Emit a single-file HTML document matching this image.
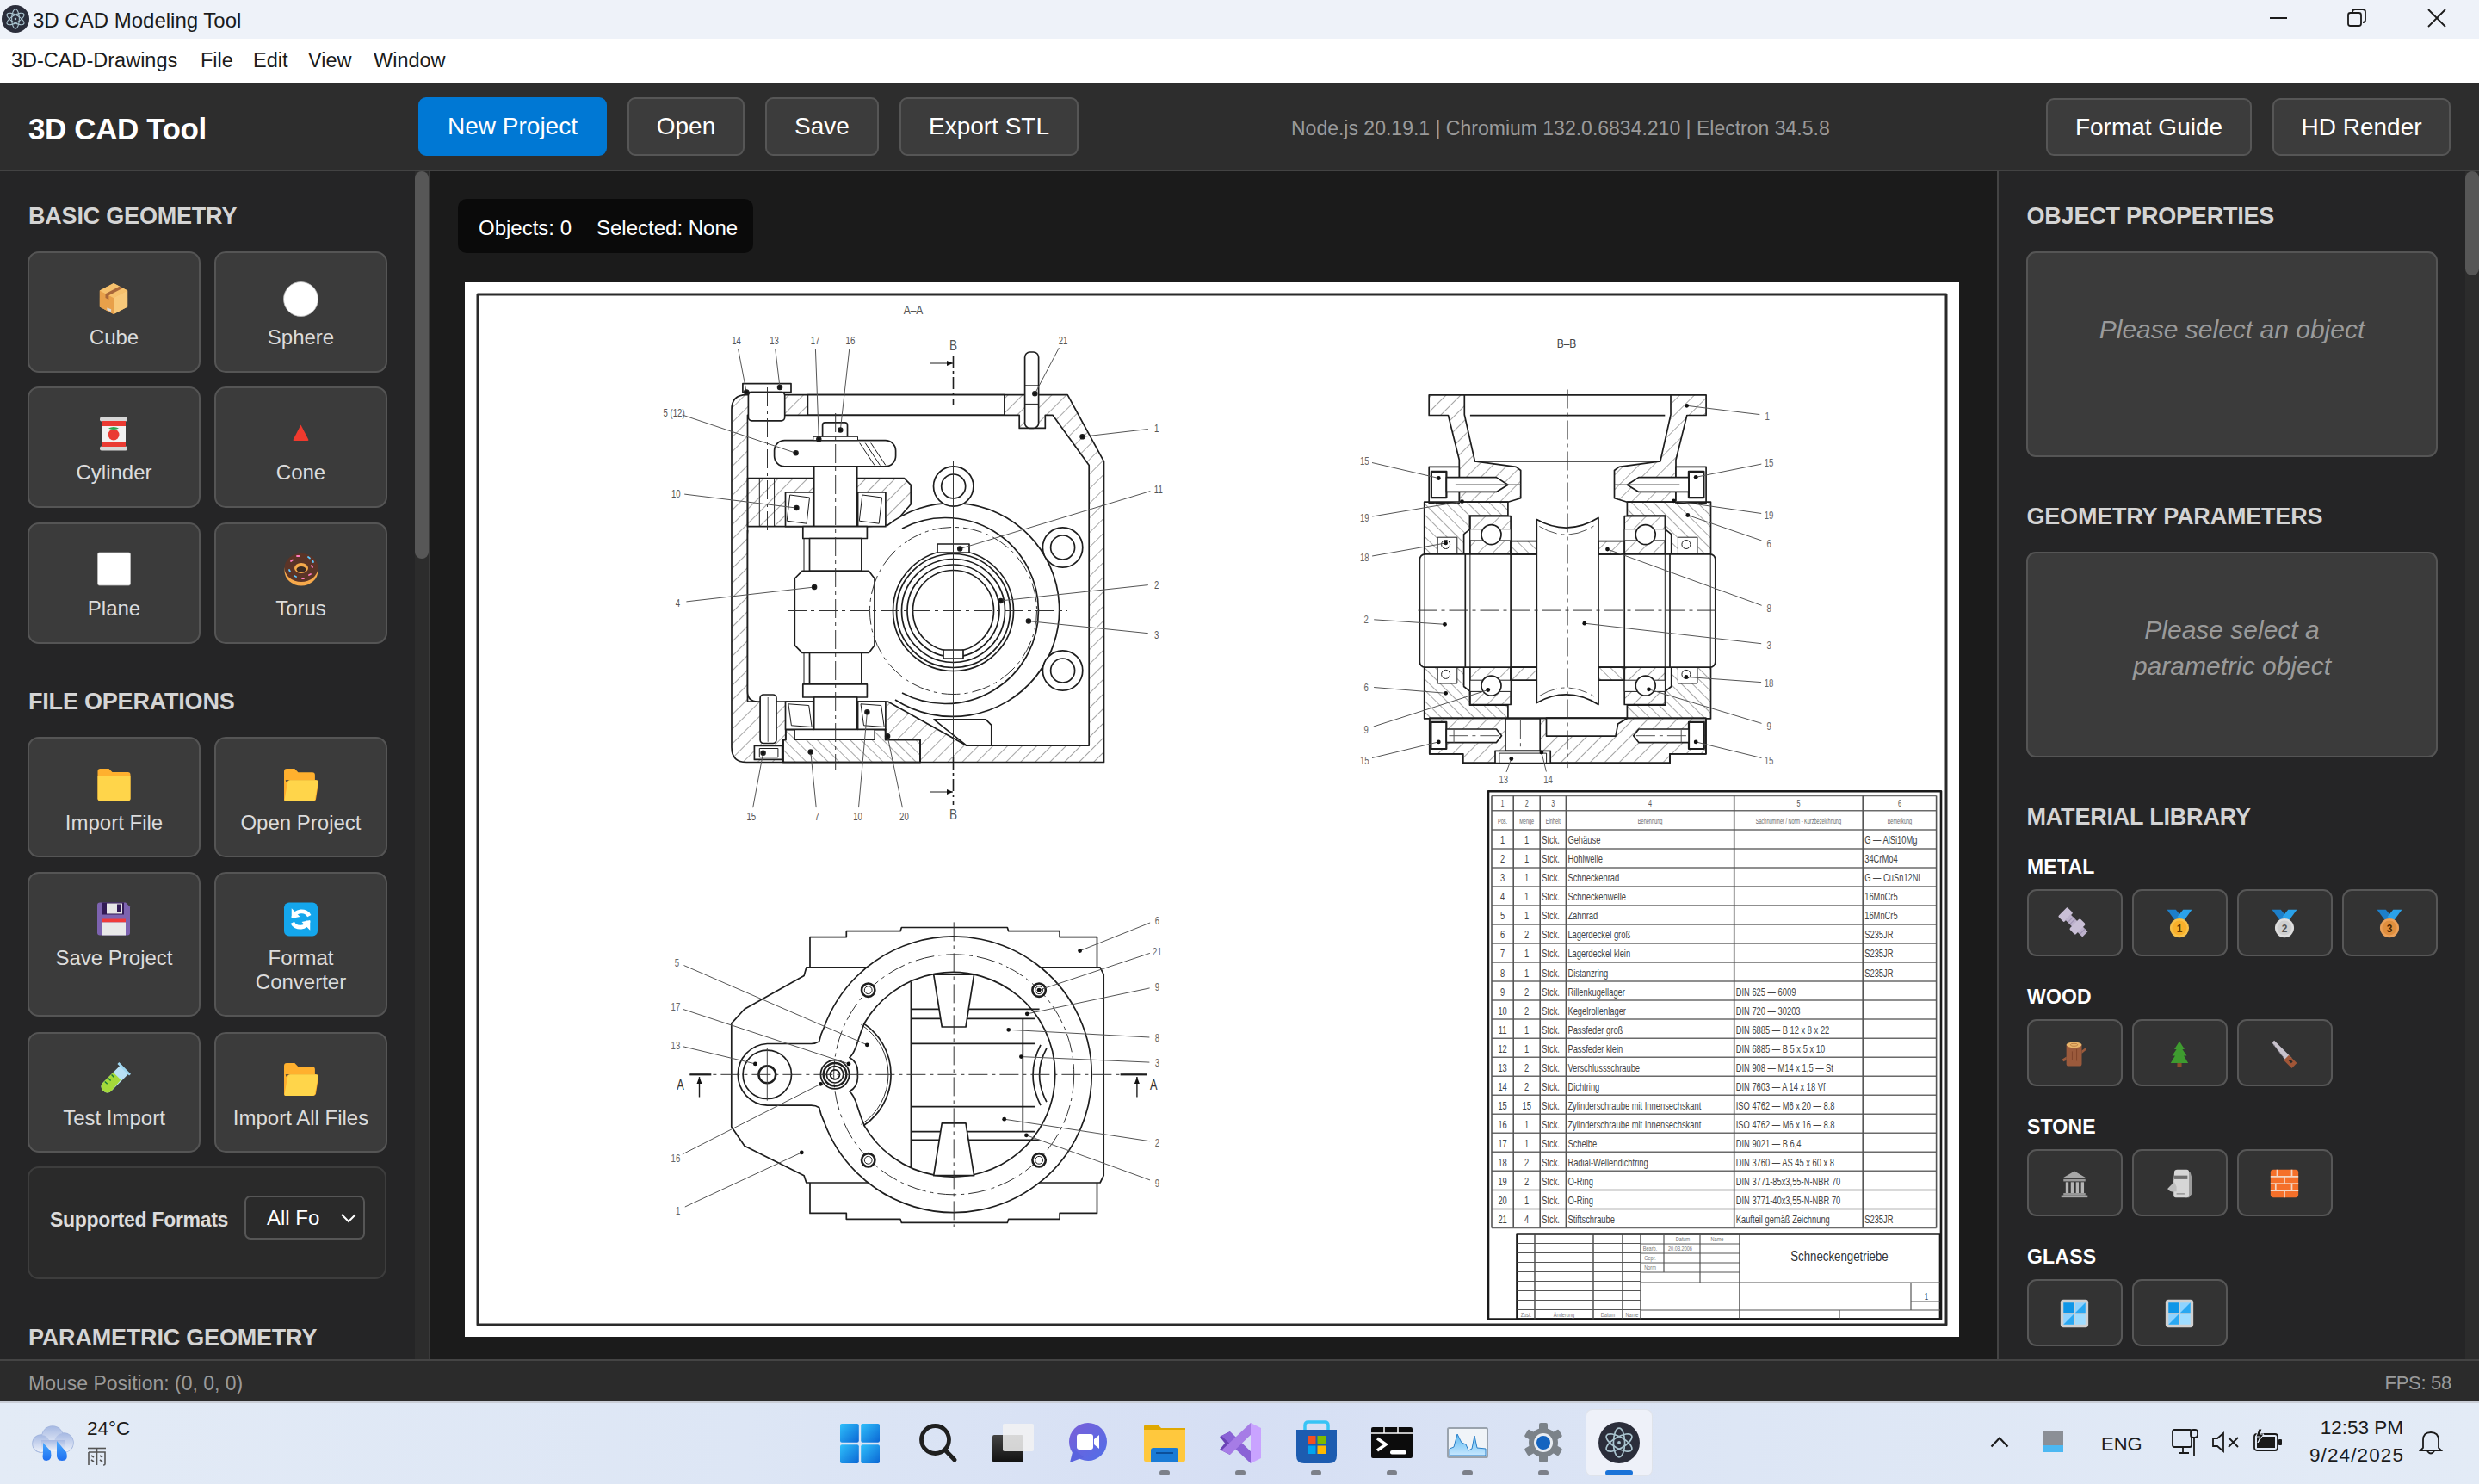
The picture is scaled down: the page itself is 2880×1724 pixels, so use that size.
<!DOCTYPE html>
<html><head><meta charset="utf-8"><title>3D CAD Modeling Tool</title>
<style>
html,body{margin:0;padding:0;}
body{width:2880px;height:1724px;position:relative;overflow:hidden;background:#1b1b1b;font-family:"Liberation Sans",sans-serif;}
.a{position:absolute;box-sizing:border-box;}
.t{position:absolute;white-space:nowrap;}
svg.a{overflow:visible;}
</style></head><body>
<div class="a" style="left:0px;top:0px;width:2880px;height:45px;background:#eef2f9"></div>
<svg class="a" style="left:2px;top:6px" width="32" height="32" viewBox="0 0 40 40"><circle cx="20" cy="20" r="20" fill="#2b2e3b"/><g fill="none" stroke="#a9c4cf" stroke-width="1.4"><ellipse cx="20" cy="20" rx="14" ry="5.5" transform="rotate(30 20 20)"/><ellipse cx="20" cy="20" rx="14" ry="5.5" transform="rotate(-30 20 20)"/><ellipse cx="20" cy="20" rx="14" ry="5.5" transform="rotate(90 20 20)"/></g><circle cx="20" cy="20" r="1.6" fill="#a9c4cf"/></svg>
<div class="t" style="left:38.0px;top:11.7px;font-size:24px;line-height:24px;color:#1b1b1b;font-weight:400;font-style:normal;letter-spacing:0px;">3D CAD Modeling Tool</div>
<div class="a" style="left:2637px;top:20px;width:20px;height:2px;background:#1b1b1b"></div>
<svg class="a" style="left:2726px;top:9px" width="24" height="24" viewBox="0 0 24 24"><rect x="2" y="6" width="15" height="15" rx="2.5" fill="none" stroke="#1b1b1b" stroke-width="1.8"/><path d="M7 5 Q7 2 10 2 L19 2 Q22 2 22 5 L22 14 Q22 17 19 17" fill="none" stroke="#1b1b1b" stroke-width="1.8"/></svg>
<svg class="a" style="left:2820px;top:10px" width="22" height="22" viewBox="0 0 22 22"><path d="M1 1 L21 21 M21 1 L1 21" stroke="#1b1b1b" stroke-width="1.8"/></svg>
<div class="a" style="left:0px;top:45px;width:2880px;height:52px;background:#fff"></div>
<div class="t" style="left:13.0px;top:59.1px;font-size:23.5px;line-height:23.5px;color:#1b1b1b;font-weight:400;font-style:normal;letter-spacing:0px;">3D-CAD-Drawings</div>
<div class="t" style="left:233.0px;top:59.1px;font-size:23.5px;line-height:23.5px;color:#1b1b1b;font-weight:400;font-style:normal;letter-spacing:0px;">File</div>
<div class="t" style="left:294.0px;top:59.1px;font-size:23.5px;line-height:23.5px;color:#1b1b1b;font-weight:400;font-style:normal;letter-spacing:0px;">Edit</div>
<div class="t" style="left:358.0px;top:59.1px;font-size:23.5px;line-height:23.5px;color:#1b1b1b;font-weight:400;font-style:normal;letter-spacing:0px;">View</div>
<div class="t" style="left:434.0px;top:59.1px;font-size:23.5px;line-height:23.5px;color:#1b1b1b;font-weight:400;font-style:normal;letter-spacing:0px;">Window</div>
<div class="a" style="left:0px;top:97px;width:2880px;height:100px;background:#2d2d2d"></div>
<div class="a" style="left:0px;top:197px;width:2880px;height:2px;background:#434343"></div>
<div class="t" style="left:33.0px;top:132.2px;font-size:35px;line-height:35px;color:#fff;font-weight:700;font-style:normal;letter-spacing:-0.4px;">3D CAD Tool</div>
<div class="a btn" style="left:486px;top:113px;width:219px;height:68px;background:#0078d4;border:2px solid #0078d4;border-radius:9px"></div>
<div class="t" style="left:295.5px;width:600px;text-align:center;top:132.7px;font-size:28px;line-height:28px;color:#fff;font-weight:400;font-style:normal;letter-spacing:0px">New Project</div>
<div class="a btn" style="left:729px;top:113px;width:136px;height:68px;background:#3c3c3c;border:2px solid #565656;border-radius:9px"></div>
<div class="t" style="left:497.0px;width:600px;text-align:center;top:132.7px;font-size:28px;line-height:28px;color:#fff;font-weight:400;font-style:normal;letter-spacing:0px">Open</div>
<div class="a btn" style="left:889px;top:113px;width:132px;height:68px;background:#3c3c3c;border:2px solid #565656;border-radius:9px"></div>
<div class="t" style="left:655.0px;width:600px;text-align:center;top:132.7px;font-size:28px;line-height:28px;color:#fff;font-weight:400;font-style:normal;letter-spacing:0px">Save</div>
<div class="a btn" style="left:1045px;top:113px;width:208px;height:68px;background:#3c3c3c;border:2px solid #565656;border-radius:9px"></div>
<div class="t" style="left:849.0px;width:600px;text-align:center;top:132.7px;font-size:28px;line-height:28px;color:#fff;font-weight:400;font-style:normal;letter-spacing:0px">Export STL</div>
<div class="a btn" style="left:2377px;top:114px;width:239px;height:67px;background:#3c3c3c;border:2px solid #565656;border-radius:9px"></div>
<div class="t" style="left:2196.5px;width:600px;text-align:center;top:133.7px;font-size:28px;line-height:28px;color:#fff;font-weight:400;font-style:normal;letter-spacing:0px">Format Guide</div>
<div class="a btn" style="left:2640px;top:114px;width:207px;height:67px;background:#3c3c3c;border:2px solid #565656;border-radius:9px"></div>
<div class="t" style="left:2443.5px;width:600px;text-align:center;top:133.7px;font-size:28px;line-height:28px;color:#fff;font-weight:400;font-style:normal;letter-spacing:0px">HD Render</div>
<div class="t" style="left:1500.0px;top:137.7px;font-size:23px;line-height:23px;color:#9a9a9a;font-weight:400;font-style:normal;letter-spacing:0px;">Node.js 20.19.1 | Chromium 132.0.6834.210 | Electron 34.5.8</div>
<div class="a" style="left:0px;top:199px;width:498px;height:1380px;background:#252526"></div>
<div class="a" style="left:498px;top:199px;width:2px;height:1380px;background:#3a3a3a"></div>
<div class="a" style="left:482px;top:199px;width:16px;height:1380px;background:#2c2c2c"></div>
<div class="a" style="left:482px;top:199px;width:16px;height:450px;background:#575757;border-radius:8px"></div>
<div class="t" style="left:33.0px;top:238.3px;font-size:27px;line-height:27px;color:#d4d4d4;font-weight:700;font-style:normal;letter-spacing:-0.2px;">BASIC GEOMETRY</div>
<div class="t" style="left:33.0px;top:802.4px;font-size:27px;line-height:27px;color:#d4d4d4;font-weight:700;font-style:normal;letter-spacing:-0.2px;">FILE OPERATIONS</div>
<div class="t" style="left:33.0px;top:1541.1px;font-size:27px;line-height:27px;color:#d4d4d4;font-weight:700;font-style:normal;letter-spacing:-0.2px;">PARAMETRIC GEOMETRY</div>
<div class="a" style="left:32px;top:292px;width:201px;height:141px;background:#3b3b3b;border:2px solid #555;border-radius:13px"></div>
<svg class="a" style="left:113px;top:326px" width="38" height="42" viewBox="0 0 40 40"><path d="M20 1 L37 10 L37 30 L20 39 L3 30 L3 10 Z" fill="#f4b860"/><path d="M20 19 L37 10 L37 30 L20 39 Z" fill="#f8c97a"/><path d="M3 10 L20 19 L20 39 L3 30 Z" fill="#e8a04a"/><path d="M3 10 L20 1 L37 10 L20 19 Z" fill="#f6c16d"/><path d="M10 14 L27 5 L31 7 L14 16 L14 21 L10 19 Z" fill="#a9683a"/><path d="M12 31 L17 33 L17 36 L12 34 Z" fill="#d9d9d9"/></svg>
<div class="t" style="left:32.0px;width:201px;text-align:center;top:380.2px;font-size:24px;line-height:24px;color:#dcdcdc;font-weight:400;font-style:normal;letter-spacing:0px">Cube</div>
<div class="a" style="left:249px;top:292px;width:201px;height:141px;background:#3b3b3b;border:2px solid #555;border-radius:13px"></div>
<svg class="a" style="left:329px;top:327px" width="41" height="41" viewBox="0 0 40 40"><circle cx="20" cy="20" r="19.5" fill="#fff" stroke="#bbb" stroke-width="0.8"/></svg>
<div class="t" style="left:249.0px;width:201px;text-align:center;top:380.2px;font-size:24px;line-height:24px;color:#dcdcdc;font-weight:400;font-style:normal;letter-spacing:0px">Sphere</div>
<div class="a" style="left:32px;top:449px;width:201px;height:141px;background:#3b3b3b;border:2px solid #555;border-radius:13px"></div>
<svg class="a" style="left:112px;top:484px" width="40" height="40" viewBox="0 0 40 40"><rect x="4" y="0.5" width="32" height="5" rx="2" fill="#d6d6d6"/><rect x="4" y="34.5" width="32" height="5" rx="2" fill="#d6d6d6"/><rect x="6" y="5" width="28" height="30" fill="#ea3a32"/><rect x="6" y="11" width="28" height="18" fill="#f1f1f1"/><circle cx="20" cy="20.5" r="8.5" fill="#f1f1f1"/><circle cx="20" cy="21" r="6.5" fill="#ea3a32"/><path d="M14 13.5 Q20 10.5 26 13.5 Q20 16.5 14 13.5Z" fill="#2fa84f"/></svg>
<div class="t" style="left:32.0px;width:201px;text-align:center;top:537.2px;font-size:24px;line-height:24px;color:#dcdcdc;font-weight:400;font-style:normal;letter-spacing:0px">Cylinder</div>
<div class="a" style="left:249px;top:449px;width:201px;height:141px;background:#3b3b3b;border:2px solid #555;border-radius:13px"></div>
<svg class="a" style="left:339px;top:492px" width="21" height="21" viewBox="0 0 40 40"><path d="M20 3 L37 36 Q37 38 35 38 L5 38 Q3 38 3 36 Z" fill="#f03a2e"/></svg>
<div class="t" style="left:249.0px;width:201px;text-align:center;top:537.2px;font-size:24px;line-height:24px;color:#dcdcdc;font-weight:400;font-style:normal;letter-spacing:0px">Cone</div>
<div class="a" style="left:32px;top:607px;width:201px;height:141px;background:#3b3b3b;border:2px solid #555;border-radius:13px"></div>
<svg class="a" style="left:112px;top:641px" width="41" height="40" viewBox="0 0 40 40"><rect x="1" y="1" width="38" height="38" rx="2" fill="#fff" stroke="#bbb" stroke-width="0.8"/></svg>
<div class="t" style="left:32.0px;width:201px;text-align:center;top:695.2px;font-size:24px;line-height:24px;color:#dcdcdc;font-weight:400;font-style:normal;letter-spacing:0px">Plane</div>
<div class="a" style="left:249px;top:607px;width:201px;height:141px;background:#3b3b3b;border:2px solid #555;border-radius:13px"></div>
<svg class="a" style="left:329.5px;top:641px" width="40" height="40" viewBox="0 0 40 40"><ellipse cx="20" cy="22" rx="19.5" ry="17.5" fill="#f6a94b"/><ellipse cx="20" cy="18.5" rx="19.5" ry="16.5" fill="#5b3427"/><ellipse cx="20" cy="19" rx="8" ry="6" fill="#f6a94b"/><ellipse cx="20" cy="20.5" rx="5.5" ry="3.5" fill="#3b2a22"/><g stroke-width="1.8" stroke-linecap="round"><path d="M8 11 l2 -1.5" stroke="#ff7bc0"/><path d="M28 6 l2 1.5" stroke="#5ec8ff"/><path d="M32 16 l1 2" stroke="#ff7bc0"/><path d="M6 21 l1 2" stroke="#5ec8ff"/><path d="M15 5 l2.5 0" stroke="#ff7bc0"/><path d="M29 27 l2 -1" stroke="#ff7bc0"/><path d="M12 28 l2 1" stroke="#5ec8ff"/><path d="M21 31 l2 0" stroke="#ff7bc0"/><path d="M33 10 l1 2" stroke="#5ec8ff"/></g></svg>
<div class="t" style="left:249.0px;width:201px;text-align:center;top:695.2px;font-size:24px;line-height:24px;color:#dcdcdc;font-weight:400;font-style:normal;letter-spacing:0px">Torus</div>
<div class="a" style="left:32px;top:856px;width:201px;height:140px;background:#3b3b3b;border:2px solid #555;border-radius:13px"></div>
<svg class="a" style="left:112px;top:892px" width="41" height="40" viewBox="0 0 40 40"><path d="M1 4 Q1 1 4 1 L14 1 L18 5 L36 5 Q39 5 39 8 L39 36 Q39 38 37 38 L3 38 Q1 38 1 36 Z" fill="#ffb02e"/><path d="M1 10 L39 10 L39 36 Q39 38 37 38 L3 38 Q1 38 1 36 Z" fill="#ffd54a"/></svg>
<div class="t" style="left:32.0px;width:201px;text-align:center;top:944.2px;font-size:24px;line-height:24px;color:#dcdcdc;font-weight:400;font-style:normal;letter-spacing:0px">Import File</div>
<div class="a" style="left:249px;top:856px;width:201px;height:140px;background:#3b3b3b;border:2px solid #555;border-radius:13px"></div>
<svg class="a" style="left:329px;top:892px" width="41" height="41" viewBox="0 0 40 40"><path d="M1 4 Q1 1 4 1 L13 1 L17 5 L33 5 Q36 5 36 8 L36 14 L1 14 Z" fill="#ffb02e"/><path d="M1 10 L1 36 Q1 38 3 38 L34 38 Q36 38 37 36 L40 17 Q40 14 37 14 L8 14 Q5 14 4 17 Z" fill="#ffb02e"/><path d="M8 14 L37 14 Q40 14 39.5 17 L36 36 Q35.5 38 33 38 L3 38 Q1 38 1.5 36 L5 17 Q5.5 14 8 14Z" fill="#ffd54a"/></svg>
<div class="t" style="left:249.0px;width:201px;text-align:center;top:944.2px;font-size:24px;line-height:24px;color:#dcdcdc;font-weight:400;font-style:normal;letter-spacing:0px">Open Project</div>
<div class="a" style="left:32px;top:1013px;width:201px;height:168px;background:#3b3b3b;border:2px solid #555;border-radius:13px"></div>
<svg class="a" style="left:112px;top:1047px" width="40" height="41" viewBox="0 0 40 40"><path d="M4 1 L34 1 L39 6 L39 36 Q39 39 36 39 L4 39 Q1 39 1 36 L1 4 Q1 1 4 1Z" fill="#7d63b0"/><rect x="6" y="1" width="26" height="14" fill="#321b55"/><rect x="12" y="2" width="18" height="12" fill="#e6e6e6"/><rect x="24" y="3" width="4" height="9" fill="#321b55"/><rect x="6" y="20" width="28" height="4" fill="#f03a3a"/><rect x="6" y="24" width="28" height="15" fill="#e9e9e9"/></svg>
<div class="t" style="left:32.0px;width:201px;text-align:center;top:1101.2px;font-size:24px;line-height:24px;color:#dcdcdc;font-weight:400;font-style:normal;letter-spacing:0px">Save Project</div>
<div class="a" style="left:249px;top:1013px;width:201px;height:168px;background:#3b3b3b;border:2px solid #555;border-radius:13px"></div>
<svg class="a" style="left:330px;top:1048px" width="39" height="40" viewBox="0 0 40 40"><rect x="0" y="0" width="40" height="40" rx="6" fill="#14a6ec"/><path d="M11 18 A10 9 0 0 1 30 16" stroke="#fff" stroke-width="5" fill="none"/><path d="M9 7 L9 19 L19 17 Z" fill="#fff"/><path d="M29 22 A10 9 0 0 1 10 24" stroke="#fff" stroke-width="5" fill="none"/><path d="M31 33 L31 21 L21 23 Z" fill="#fff"/></svg>
<div class="t" style="left:249.0px;width:201px;text-align:center;top:1101.2px;font-size:24px;line-height:24px;color:#dcdcdc;font-weight:400;font-style:normal;letter-spacing:0px">Format</div>
<div class="t" style="left:249.0px;width:201px;text-align:center;top:1128.7px;font-size:24px;line-height:24px;color:#dcdcdc;font-weight:400;font-style:normal;letter-spacing:0px">Converter</div>
<div class="a" style="left:32px;top:1199px;width:201px;height:140px;background:#3b3b3b;border:2px solid #555;border-radius:13px"></div>
<svg class="a" style="left:114px;top:1233px" width="39" height="39" viewBox="0 0 40 40"><path d="M27 4 L37 14 L16 35 Q11 40 6 35 Q1 30 6 25 Z" fill="#b8e0f5"/><path d="M18 13 L27 22 L16 35 Q11 40 6 35 Q1 30 6 25 Z" fill="#a5d93a"/><path d="M25 1 L39 15 L37 17 L23 3 Z" fill="#9fd6f0"/><g stroke="#1b7a3a" stroke-width="1.5"><path d="M12 20 l3 3"/><path d="M16 16 l3 3"/><path d="M8 24 l3 3"/></g></svg>
<div class="t" style="left:32.0px;width:201px;text-align:center;top:1287.2px;font-size:24px;line-height:24px;color:#dcdcdc;font-weight:400;font-style:normal;letter-spacing:0px">Test Import</div>
<div class="a" style="left:249px;top:1199px;width:201px;height:140px;background:#3b3b3b;border:2px solid #555;border-radius:13px"></div>
<svg class="a" style="left:329px;top:1234px" width="41" height="41" viewBox="0 0 40 40"><path d="M1 4 Q1 1 4 1 L13 1 L17 5 L33 5 Q36 5 36 8 L36 14 L1 14 Z" fill="#ffb02e"/><path d="M1 10 L1 36 Q1 38 3 38 L34 38 Q36 38 37 36 L40 17 Q40 14 37 14 L8 14 Q5 14 4 17 Z" fill="#ffb02e"/><path d="M8 14 L37 14 Q40 14 39.5 17 L36 36 Q35.5 38 33 38 L3 38 Q1 38 1.5 36 L5 17 Q5.5 14 8 14Z" fill="#ffd54a"/></svg>
<div class="t" style="left:249.0px;width:201px;text-align:center;top:1287.2px;font-size:24px;line-height:24px;color:#dcdcdc;font-weight:400;font-style:normal;letter-spacing:0px">Import All Files</div>
<div class="a" style="left:32px;top:1355px;width:417px;height:131px;background:#2a2a2a;border:2px solid #3d3d3d;border-radius:13px"></div>
<div class="t" style="left:58.0px;top:1405.9px;font-size:23px;line-height:23px;color:#dcdcdc;font-weight:700;font-style:normal;letter-spacing:-0.3px;">Supported Formats</div>
<div class="a" style="left:284px;top:1389px;width:140px;height:51px;background:#2a2a2a;border:2px solid #565656;border-radius:7px"></div>
<div class="t" style="left:310.0px;top:1403.0px;font-size:24px;line-height:24px;color:#fff;font-weight:400;font-style:normal;letter-spacing:0px;">All Fo</div>
<svg class="a" style="left:395px;top:1408px" width="20" height="14" viewBox="0 0 20 14"><path d="M2 3 L10 11 L18 3" fill="none" stroke="#fff" stroke-width="2"/></svg>
<div class="a" style="left:500px;top:199px;width:1820px;height:1380px;background:#1b1b1b"></div>
<div class="a" style="left:532px;top:231px;width:343px;height:63px;background:#0a0a0a;border-radius:10px"></div>
<div class="t" style="left:556.0px;top:253.2px;font-size:24px;line-height:24px;color:#fff;font-weight:400;font-style:normal;letter-spacing:0px;">Objects: 0</div>
<div class="t" style="left:693.0px;top:253.2px;font-size:24px;line-height:24px;color:#fff;font-weight:400;font-style:normal;letter-spacing:0px;">Selected: None</div>
<div class="a" style="left:540px;top:328px;width:1736px;height:1225px;background:#fff"></div>
<svg class="a" style="left:0;top:0" width="2880" height="1724" viewBox="0 0 2880 1724">
<defs><pattern id="hA" width="12" height="12" patternUnits="userSpaceOnUse" patternTransform="rotate(45)"><line x1="0" y1="0" x2="0" y2="12" stroke="#6a6a6a" stroke-width="1.2"/></pattern><pattern id="hB" width="9" height="9" patternUnits="userSpaceOnUse" patternTransform="rotate(-45)"><line x1="0" y1="0" x2="0" y2="9" stroke="#6a6a6a" stroke-width="1.2"/></pattern><pattern id="hC" width="9" height="9" patternUnits="userSpaceOnUse" patternTransform="rotate(45)"><line x1="0" y1="0" x2="0" y2="9" stroke="#5a5a5a" stroke-width="1.1"/></pattern></defs>
<g fill="none" stroke="#1e1e1e" stroke-width="1.7" stroke-linejoin="round">
<rect x="555" y="342" width="1706" height="1197" fill="none" stroke="#2a2a2a" stroke-width="3"/>
<path d="M850.0 868.2 L850.0 475.8 Q850.0 458.6 867.2 458.6 L1240.2 458.6 L1282.5 536.2 L1282.5 885.5 L867.2 885.5 Q850.0 885.5 850.0 868.2 Z" fill="url(#hA)" stroke="#1e1e1e" stroke-width="1.7"/>
<path d="M938.4 458.6 L1166.9 458.6 L1166.9 482.3 L938.4 482.3 Z" fill="#fff" stroke="#1e1e1e"   />
<path d="M868.5 488.8 L868.5 482.3 L1184.2 482.3 L1184.2 497.4 L1214.3 497.4 L1214.3 482.3 L1223.0 482.3 L1265.2 540.5 L1265.2 866.1 L1123.0 866.2 L1031.4 815.0 L868.5 815.0 Z" fill="#fff" stroke="#1e1e1e"   />
<path d="M868.5 555.6 L1050.5 555.6 L1058.2 563.4 L1058.2 585.8 L1037.5 609.5 L1007.4 611.7 L868.5 611.7 Z" fill="url(#hA)" stroke="#1e1e1e"   />
<path d="M882.3 555.6 L882.3 611.7" fill="none" stroke="#1e1e1e" stroke-width="1.0"  />
<path d="M899.6 555.6 L899.6 611.7" fill="none" stroke="#1e1e1e" stroke-width="1.0"  />
<path d="M1106.5 835.9 L1145.3 835.9 L1151.8 842.4 L1151.8 866.1 L1122.9 866.1 L1085.0 835.9 Z" fill="#fff" stroke="#1e1e1e"   />
<path d="M868.5 616.0 L868.5 803.6 Q868.5 815.0 880.1 815.0 L934.0 815.0" fill="#fff" stroke="#1e1e1e" stroke-width="1.7"/>
<path d="M909.9 859.5 L912.8 859.5 L912.8 847.4 L1028.7 847.4 L1028.7 859.5 L1069.0 859.5 L1069.0 885.5 L909.9 885.5 Z" fill="#fff" stroke="#1e1e1e"   />
<path d="M909.9 859.5 L912.8 859.5 L912.8 847.4 L1028.7 847.4 L1028.7 859.5 L1069.0 859.5 L1069.0 885.5 L909.9 885.5 Z" fill="url(#hB)" stroke="#1e1e1e"   />
<rect x="923.3" y="847.4" width="92.7" height="12.1" rx="0" fill="#fff" stroke="#1e1e1e" stroke-width="1.2"  />
<rect x="876.4" y="866.3" width="32.3" height="16.1" rx="0" fill="#fff" stroke="#1e1e1e"   />
<rect x="882.3" y="869.5" width="21.6" height="10.3" rx="0" fill="#fff" stroke="#1e1e1e" stroke-width="1.0"  />
<rect x="883.1" y="807.0" width="18.9" height="56.5" rx="4" fill="#fff" stroke="#1e1e1e"   />
<path d="M892.2 810.0 L892.2 861.8" stroke="#555" stroke-width="1.0"  />
<path d="M934.0 611.7 L934.0 807.9" fill="none" stroke="#1e1e1e" stroke-width="1.0"  />
<rect x="862.9" y="445.6" width="56.1" height="9.9" rx="0" fill="#fff" stroke="#1e1e1e"   />
<rect x="869.4" y="455.6" width="42.3" height="33.2" rx="4" fill="#fff" stroke="#1e1e1e"   />
<rect x="1190.6" y="409.0" width="16.0" height="88.4" rx="6" fill="#fff" stroke="#1e1e1e"   />
<path d="M1190.6 447.8 L1206.6 447.8" fill="none" stroke="#1e1e1e" stroke-width="1.0"  />
<path d="M1190.6 469.4 L1206.6 469.4" fill="none" stroke="#1e1e1e" stroke-width="1.0"  />
<rect x="899.6" y="511.6" width="141.0" height="30.2" rx="12" fill="#fff" stroke="#1e1e1e"   />
<path d="M998.7 514.6 L1016.0 540.5" fill="none" stroke="#1e1e1e" stroke-width="1.0"  />
<path d="M1005.2 514.6 L1022.4 540.5" fill="none" stroke="#1e1e1e" stroke-width="1.0"  />
<path d="M1011.7 514.6 L1028.9 540.5" fill="none" stroke="#1e1e1e" stroke-width="1.0"  />
<rect x="955.6" y="490.9" width="28.9" height="19.4" rx="3" fill="#fff" stroke="#1e1e1e"   />
<rect x="944.8" y="507.3" width="51.7" height="4.3" rx="0" fill="#fff" stroke="#1e1e1e" stroke-width="1.0"  />
<rect x="945.7" y="541.8" width="50.0" height="69.9" rx="0" fill="#fff" stroke="#1e1e1e"   />
<rect x="912.5" y="572.0" width="32.3" height="39.7" rx="0" fill="#fff" stroke="#1e1e1e"   />
<path d="M917.7 575.0 L940.5 578.0 L937.1 608.2 L914.2 605.2 Z" fill="none" stroke="#1e1e1e" stroke-width="1.0"  />
<rect x="996.6" y="572.0" width="32.3" height="39.7" rx="0" fill="#fff" stroke="#1e1e1e"   />
<path d="M1001.8 575.0 L1024.6 578.0 L1021.2 608.2 L998.3 605.2 Z" fill="none" stroke="#1e1e1e" stroke-width="1.0"  />
<rect x="932.8" y="611.7" width="74.6" height="13.8" rx="0" fill="#fff" stroke="#1e1e1e"   />
<rect x="940.5" y="625.5" width="60.4" height="37.9" rx="0" fill="#fff" stroke="#1e1e1e"   />
<path d="M931.9 663.4 L1009.5 663.4 L1016.0 672.0 L1016.0 749.7 L1009.5 758.3 L931.9 758.3 L923.3 749.7 L923.3 672.0 Z" fill="#fff" stroke="#1e1e1e"   />
<rect x="940.5" y="758.3" width="60.4" height="36.7" rx="0" fill="#fff" stroke="#1e1e1e"   />
<rect x="932.8" y="794.9" width="74.6" height="15.1" rx="0" fill="#fff" stroke="#1e1e1e"   />
<rect x="945.7" y="810.0" width="50.0" height="37.4" rx="0" fill="#fff" stroke="#1e1e1e"   />
<rect x="912.5" y="815.0" width="32.3" height="32.4" rx="0" fill="#fff" stroke="#1e1e1e"   />
<path d="M915.9 817.8 L939.7 819.5 L943.1 844.5 L919.4 842.8 Z" fill="none" stroke="#1e1e1e" stroke-width="1.0"  />
<rect x="996.6" y="815.0" width="32.3" height="32.4" rx="0" fill="#fff" stroke="#1e1e1e"   />
<path d="M1000.0 817.8 L1023.7 819.5 L1027.2 844.5 L1003.5 842.8 Z" fill="none" stroke="#1e1e1e" stroke-width="1.0"  />
<path d="M1030.0 611 A124 124 0 1 1 1040 813" fill="#fff" stroke="#1e1e1e" stroke-width="1.7"/>
<path d="M1048 614 A108 108 0 1 1 1048 805" fill="none" stroke="#1e1e1e" stroke-width="1.7"/>
<circle cx="1107.5" cy="709.5" r="97" fill="none" stroke="#333" stroke-width="1.0" stroke-dasharray="22 5 4 5"/>
<circle cx="1107.5" cy="709.5" r="70.0" fill="none" stroke="#1e1e1e"   />
<circle cx="1107.5" cy="709.5" r="66.0" fill="none" stroke="#1e1e1e"   />
<circle cx="1107.5" cy="709.5" r="60.0" fill="none" stroke="#1e1e1e"   />
<circle cx="1107.5" cy="709.5" r="53.5" fill="none" stroke="#1e1e1e"   />
<circle cx="1107.5" cy="709.5" r="47.0" fill="none" stroke="#1e1e1e"   />
<rect x="1089.0" y="632.0" width="37.0" height="10.0" rx="0" fill="#fff" stroke="#1e1e1e"   />
<rect x="1096.0" y="755.0" width="23.0" height="10.0" rx="0" fill="#fff" stroke="#1e1e1e"   />
<circle cx="1107.7" cy="565.0" r="23.2" fill="#fff" stroke="#1e1e1e"   />
<circle cx="1107.7" cy="565.0" r="14.0" fill="none" stroke="#1e1e1e"   />
<circle cx="1234.6" cy="636.0" r="23.2" fill="#fff" stroke="#1e1e1e"   />
<circle cx="1234.6" cy="636.0" r="14.0" fill="none" stroke="#1e1e1e"   />
<circle cx="1234.6" cy="779.0" r="23.2" fill="#fff" stroke="#1e1e1e"   />
<circle cx="1234.6" cy="779.0" r="14.0" fill="none" stroke="#1e1e1e"   />
<path d="M1057.5 663.0 L1057.5 663.0" stroke="#333" stroke-width="1.0"  stroke-dasharray="18.0 4.0 3.0 4.0"/>
<path d="M1107.5 535.0 L1107.5 895.0" stroke="#333" stroke-width="1.0"  />
<path d="M915.0 709.5 L1240.0 709.5" stroke="#333" stroke-width="1.0"  stroke-dasharray="22 5 4 5"/>
<path d="M970.7 480.0 L970.7 895.0" stroke="#333" stroke-width="1.0"  stroke-dasharray="22 5 4 5"/>
<path d="M891.5 450.0 L891.5 620.0" stroke="#333" stroke-width="1.0"  stroke-dasharray="22 5 4 5"/>
<path d="M1107.5 413.0 L1107.5 470.0" stroke="#1e1e1e" stroke-width="1.6"  stroke-dasharray="14 4 3 4"/>
<path d="M1107.5 880.0 L1107.5 935.0" stroke="#1e1e1e" stroke-width="1.6"  stroke-dasharray="14 4 3 4"/>
<path d="M1081.0 422.0 L1107.0 422.0" stroke="#1e1e1e" stroke-width="1.0"  />
<path d="M1081.0 920.0 L1107.0 920.0" stroke="#1e1e1e" stroke-width="1.0"  />
<path d="M1107 422 l-7 -3 v6z M1107 920 l-7 -3 v6z" fill="#111" stroke="none"/>
<text x="1107.5" y="407" font-size="17" fill="#555" stroke="none" font-family="Liberation Sans" text-anchor="middle" transform="translate(1107.5 407) scale(0.8 1) translate(-1107.5 -407)">B</text>
<text x="1107.5" y="952" font-size="17" fill="#555" stroke="none" font-family="Liberation Sans" text-anchor="middle" transform="translate(1107.5 952) scale(0.8 1) translate(-1107.5 -952)">B</text>
<text x="1061" y="365" font-size="15" fill="#555" stroke="none" font-family="Liberation Sans" text-anchor="middle" transform="translate(1061 365) scale(0.8 1) translate(-1061 -365)">A–A</text>
<path d="M857.5 405.0 L867.2 455.6" stroke="#555" stroke-width="1.0"  />
<circle cx="867.2" cy="455.6" r="2.4" fill="#111"/>
<text x="855.567054764985" y="400.1962052608883" font-size="12" fill="#555" stroke="none" font-family="Liberation Sans" text-anchor="middle" transform="translate(855.567054764985 400.1962052608883) scale(0.8 1) translate(-855.567054764985 -400.1962052608883)">14</text>
<path d="M900.7 405.1 L906.0 450.0" stroke="#555" stroke-width="1.0"  />
<circle cx="906.0" cy="450.0" r="2.4" fill="#111"/>
<text x="899.5515308322553" y="400.1962052608883" font-size="12" fill="#555" stroke="none" font-family="Liberation Sans" text-anchor="middle" transform="translate(899.5515308322553 400.1962052608883) scale(0.8 1) translate(-899.5515308322553 -400.1962052608883)">13</text>
<path d="M947.4 405.2 L951.3 510.3" stroke="#555" stroke-width="1.0"  />
<circle cx="951.3" cy="510.3" r="2.4" fill="#111"/>
<text x="946.9857697283312" y="400.1962052608883" font-size="12" fill="#555" stroke="none" font-family="Liberation Sans" text-anchor="middle" transform="translate(946.9857697283312 400.1962052608883) scale(0.8 1) translate(-946.9857697283312 -400.1962052608883)">17</text>
<path d="M986.8 405.1 L976.3 499.6" stroke="#555" stroke-width="1.0"  />
<circle cx="976.3" cy="499.6" r="2.4" fill="#111"/>
<text x="987.9517033203967" y="400.1962052608883" font-size="12" fill="#555" stroke="none" font-family="Liberation Sans" text-anchor="middle" transform="translate(987.9517033203967 400.1962052608883) scale(0.8 1) translate(-987.9517033203967 -400.1962052608883)">16</text>
<path d="M1230.4 404.0 L1202.3 457.3" stroke="#555" stroke-width="1.0"  />
<circle cx="1202.3" cy="457.3" r="2.4" fill="#111"/>
<text x="1235.0409659335921" y="400.1962052608883" font-size="12" fill="#555" stroke="none" font-family="Liberation Sans" text-anchor="middle" transform="translate(1235.0409659335921 400.1962052608883) scale(0.8 1) translate(-1235.0409659335921 -400.1962052608883)">21</text>
<path d="M792.6 482.0 L924.6 526.3" stroke="#555" stroke-width="1.0"  />
<circle cx="924.6" cy="526.3" r="2.4" fill="#111"/>
<text x="783.122035360069" y="483.8529538594222" font-size="12" fill="#555" stroke="none" font-family="Liberation Sans" text-anchor="middle" transform="translate(783.122035360069 483.8529538594222) scale(0.8 1) translate(-783.122035360069 -483.8529538594222)">5 (12)</text>
<path d="M1333.8 498.5 L1257.5 507.3" stroke="#555" stroke-width="1.0"  />
<circle cx="1257.5" cy="507.3" r="2.4" fill="#111"/>
<text x="1343.708495040966" y="502.39542906425186" font-size="12" fill="#555" stroke="none" font-family="Liberation Sans" text-anchor="middle" transform="translate(1343.708495040966 502.39542906425186) scale(0.8 1) translate(-1343.708495040966 -502.39542906425186)">1</text>
<path d="M795.2 574.1 L925.4 590.1" stroke="#555" stroke-width="1.0"  />
<circle cx="925.4" cy="590.1" r="2.4" fill="#111"/>
<text x="785.2781371280724" y="577.8589909443726" font-size="12" fill="#555" stroke="none" font-family="Liberation Sans" text-anchor="middle" transform="translate(785.2781371280724 577.8589909443726) scale(0.8 1) translate(-785.2781371280724 -577.8589909443726)">10</text>
<path d="M1336.3 570.6 L1115.2 637.5" stroke="#555" stroke-width="1.0"  />
<circle cx="1115.2" cy="637.5" r="2.4" fill="#111"/>
<text x="1345.8645968089695" y="572.6843467011643" font-size="12" fill="#555" stroke="none" font-family="Liberation Sans" text-anchor="middle" transform="translate(1345.8645968089695 572.6843467011643) scale(0.8 1) translate(-1345.8645968089695 -572.6843467011643)">11</text>
<path d="M797.4 698.9 L946.1 682.0" stroke="#555" stroke-width="1.0"  />
<circle cx="946.1" cy="682.0" r="2.4" fill="#111"/>
<text x="787.4342388960758" y="705.068995256576" font-size="12" fill="#555" stroke="none" font-family="Liberation Sans" text-anchor="middle" transform="translate(787.4342388960758 705.068995256576) scale(0.8 1) translate(-787.4342388960758 -705.068995256576)">4</text>
<path d="M1333.8 679.6 L1162.6 697.9" stroke="#555" stroke-width="1.0"  />
<circle cx="1162.6" cy="697.9" r="2.4" fill="#111"/>
<text x="1343.708495040966" y="683.5079775765416" font-size="12" fill="#555" stroke="none" font-family="Liberation Sans" text-anchor="middle" transform="translate(1343.708495040966 683.5079775765416) scale(0.8 1) translate(-1343.708495040966 -683.5079775765416)">2</text>
<path d="M1333.8 735.7 L1194.9 721.6" stroke="#555" stroke-width="1.0"  />
<circle cx="1194.9" cy="721.6" r="2.4" fill="#111"/>
<text x="1343.708495040966" y="741.7227253126348" font-size="12" fill="#555" stroke="none" font-family="Liberation Sans" text-anchor="middle" transform="translate(1343.708495040966 741.7227253126348) scale(0.8 1) translate(-1343.708495040966 -741.7227253126348)">3</text>
<path d="M874.7 938.2 L886.6 874.7" stroke="#555" stroke-width="1.0"  />
<circle cx="886.6" cy="874.7" r="2.4" fill="#111"/>
<text x="872.8158689090126" y="953.0206985769728" font-size="12" fill="#555" stroke="none" font-family="Liberation Sans" text-anchor="middle" transform="translate(872.8158689090126 953.0206985769728) scale(0.8 1) translate(-872.8158689090126 -953.0206985769728)">15</text>
<path d="M948.2 938.1 L941.8 873.4" stroke="#555" stroke-width="1.0"  />
<circle cx="941.8" cy="873.4" r="2.4" fill="#111"/>
<text x="949.1418714963346" y="953.0206985769728" font-size="12" fill="#555" stroke="none" font-family="Liberation Sans" text-anchor="middle" transform="translate(949.1418714963346 953.0206985769728) scale(0.8 1) translate(-949.1418714963346 -953.0206985769728)">7</text>
<path d="M997.5 938.1 L1007.4 827.3" stroke="#555" stroke-width="1.0"  />
<circle cx="1007.4" cy="827.3" r="2.4" fill="#111"/>
<text x="996.5761103924106" y="953.0206985769728" font-size="12" fill="#555" stroke="none" font-family="Liberation Sans" text-anchor="middle" transform="translate(996.5761103924106 953.0206985769728) scale(0.8 1) translate(-996.5761103924106 -953.0206985769728)">10</text>
<path d="M1048.4 938.2 L1031.1 855.3" stroke="#555" stroke-width="1.0"  />
<circle cx="1031.1" cy="855.3" r="2.4" fill="#111"/>
<text x="1050.4786545924967" y="953.0206985769728" font-size="12" fill="#555" stroke="none" font-family="Liberation Sans" text-anchor="middle" transform="translate(1050.4786545924967 953.0206985769728) scale(0.8 1) translate(-1050.4786545924967 -953.0206985769728)">20</text>
<path d="M1660.2 458.9 L1701.3 458.9 L1701.3 481.8 L1713.4 535.8 L1761.3 542.4 L1766.7 546.5 L1766.7 578.8 L1751.9 583.2 L1695.3 583.2 L1695.3 534.3 L1682.5 482.5 L1660.2 482.5 Z" fill="url(#hA)" stroke="#1e1e1e"   />
<path d="M1982.1 458.9 L1941.0 458.9 L1941.0 481.8 L1928.9 535.8 L1881.0 542.4 L1875.5 546.5 L1875.5 578.8 L1890.4 583.2 L1947.0 583.2 L1947.0 534.3 L1959.8 482.5 L1982.1 482.5 Z" fill="url(#hA)" stroke="#1e1e1e"   />
<path d="M1701.3 458.9 L1941.0 458.9" stroke="#1e1e1e"   />
<path d="M1707.9 482.6 L1934.3 482.6" stroke="#1e1e1e"   />
<path d="M1713.4 535.8 L1928.9 535.8" stroke="#1e1e1e"   />
<path d="M1660.2 542.4 L1695.3 542.4 L1695.3 584.2 L1660.2 584.2 Z" fill="#fff" stroke="#1e1e1e"   />
<path d="M1662.9 547.8 L1680.4 547.8 L1680.4 578.1 L1662.9 578.1 Z" fill="#fff" stroke="#1e1e1e" stroke-width="2.2"  />
<path d="M1680.4 554.6 L1738.4 554.6 L1751.9 563.3 L1738.4 571.4 L1680.4 571.4 Z" fill="#fff" stroke="#1e1e1e"   />
<path d="M1690.9 563.0 L1766.4 563.0" stroke="#555" stroke-width="1.0"  />
<path d="M1982.1 542.4 L1947.0 542.4 L1947.0 584.2 L1982.1 584.2 Z" fill="#fff" stroke="#1e1e1e"   />
<path d="M1979.4 547.8 L1961.9 547.8 L1961.9 578.1 L1979.4 578.1 Z" fill="#fff" stroke="#1e1e1e" stroke-width="2.2"  />
<path d="M1961.9 554.6 L1903.8 554.6 L1890.4 563.3 L1903.8 571.4 L1961.9 571.4 Z" fill="#fff" stroke="#1e1e1e"   />
<path d="M1951.3 563.0 L1875.8 563.0" stroke="#555" stroke-width="1.0"  />
<path d="M1654.7 583.2 L1751.9 583.2 L1751.9 599.0 L1707.4 599.0 L1707.4 615.2 L1700.6 620.6 L1700.6 643.8 L1654.7 643.8 Z" fill="url(#hB)" stroke="#1e1e1e"   />
<path d="M1987.5 583.2 L1890.4 583.2 L1890.4 599.0 L1934.9 599.0 L1934.9 615.2 L1941.7 620.6 L1941.7 643.8 L1987.5 643.8 Z" fill="url(#hB)" stroke="#1e1e1e"   />
<path d="M1654.7 834.9 L1751.9 834.9 L1751.9 819.1 L1707.4 819.1 L1707.4 802.9 L1700.6 797.5 L1700.6 774.3 L1654.7 774.3 Z" fill="url(#hB)" stroke="#1e1e1e"   />
<path d="M1987.5 834.9 L1890.4 834.9 L1890.4 819.1 L1934.9 819.1 L1934.9 802.9 L1941.7 797.5 L1941.7 774.3 L1987.5 774.3 Z" fill="url(#hB)" stroke="#1e1e1e"   />
<rect x="1670.2" y="624.2" width="22.6" height="18.9" rx="0" fill="#fff" stroke="#1e1e1e" stroke-width="1.0"  />
<circle cx="1679.6" cy="632.5" r="5.0" fill="none" stroke="#1e1e1e" stroke-width="1.0"  />
<rect x="1949.4" y="624.2" width="22.6" height="18.9" rx="0" fill="#fff" stroke="#1e1e1e" stroke-width="1.0"  />
<circle cx="1958.9" cy="632.5" r="5.0" fill="none" stroke="#1e1e1e" stroke-width="1.0"  />
<rect x="1670.2" y="775.1" width="22.6" height="18.9" rx="0" fill="#fff" stroke="#1e1e1e" stroke-width="1.0"  />
<circle cx="1679.6" cy="783.4" r="5.0" fill="none" stroke="#1e1e1e" stroke-width="1.0"  />
<rect x="1949.4" y="775.1" width="22.6" height="18.9" rx="0" fill="#fff" stroke="#1e1e1e" stroke-width="1.0"  />
<circle cx="1958.9" cy="783.4" r="5.0" fill="none" stroke="#1e1e1e" stroke-width="1.0"  />
<rect x="1707.9" y="599.6" width="47.2" height="43.4" rx="0" fill="url(#hA)" stroke="#1e1e1e"   />
<rect x="1707.9" y="614.7" width="47.2" height="13.2" rx="0" fill="#fff" stroke="#1e1e1e" stroke-width="1.0"  />
<circle cx="1732.5" cy="621.1" r="11.5" fill="#fff" stroke="#1e1e1e"   />
<rect x="1887.2" y="599.6" width="47.2" height="43.4" rx="0" fill="url(#hA)" stroke="#1e1e1e"   />
<rect x="1887.2" y="614.7" width="47.2" height="13.2" rx="0" fill="#fff" stroke="#1e1e1e" stroke-width="1.0"  />
<circle cx="1911.7" cy="621.1" r="11.5" fill="#fff" stroke="#1e1e1e"   />
<rect x="1707.9" y="775.1" width="47.2" height="43.4" rx="0" fill="url(#hA)" stroke="#1e1e1e"   />
<rect x="1707.9" y="790.2" width="47.2" height="13.2" rx="0" fill="#fff" stroke="#1e1e1e" stroke-width="1.0"  />
<circle cx="1732.5" cy="796.6" r="11.5" fill="#fff" stroke="#1e1e1e"   />
<rect x="1887.2" y="775.1" width="47.2" height="43.4" rx="0" fill="url(#hA)" stroke="#1e1e1e"   />
<rect x="1887.2" y="790.2" width="47.2" height="13.2" rx="0" fill="#fff" stroke="#1e1e1e" stroke-width="1.0"  />
<circle cx="1911.7" cy="796.6" r="11.5" fill="#fff" stroke="#1e1e1e"   />
<rect x="1649.4" y="643.8" width="343.4" height="131.3" rx="6" fill="#fff" stroke="#1e1e1e"   />
<path d="M1655.1 643.8 L1655.1 775.1" stroke="#1e1e1e" stroke-width="1.0"  />
<path d="M1702.3 643.8 L1702.3 775.1" stroke="#1e1e1e" stroke-width="1.7"  />
<path d="M1707.9 643.8 L1707.9 775.1" stroke="#1e1e1e" stroke-width="1.0"  />
<path d="M1755.1 643.8 L1755.1 775.1" stroke="#1e1e1e" stroke-width="1.7"  />
<path d="M1887.2 643.8 L1887.2 775.1" stroke="#1e1e1e" stroke-width="1.7"  />
<path d="M1934.3 643.8 L1934.3 775.1" stroke="#1e1e1e" stroke-width="1.0"  />
<path d="M1940.0 643.8 L1940.0 775.1" stroke="#1e1e1e" stroke-width="1.7"  />
<path d="M1987.2 643.8 L1987.2 775.1" stroke="#1e1e1e" stroke-width="1.0"  />
<rect x="1755.1" y="628.7" width="30.2" height="15.1" rx="0" fill="url(#hB)" stroke="#1e1e1e"   />
<rect x="1755.1" y="775.1" width="30.2" height="15.1" rx="0" fill="url(#hA)" stroke="#1e1e1e"   />
<rect x="1857.0" y="628.7" width="30.2" height="15.1" rx="0" fill="url(#hA)" stroke="#1e1e1e"   />
<rect x="1857.0" y="775.1" width="30.2" height="15.1" rx="0" fill="url(#hB)" stroke="#1e1e1e"   />
<path d="M1785.3 603.5 Q1821.1 623.5 1857.0 601.5 L1857.0 818.5 Q1821.1 796.5 1785.3 816.5 Z" fill="#fff" stroke="#1e1e1e" stroke-width="1.7"/>
<path d="M1788.3 611.5 Q1821.1 631.5 1854.0 609.5" fill="none" stroke="#555" stroke-width="1.0" stroke-dasharray="22 5 4 5"/>
<path d="M1788.3 808.5 Q1821.1 788.5 1854.0 810.5" fill="none" stroke="#555" stroke-width="1.0" stroke-dasharray="22 5 4 5"/>
<path d="M1660.8 834.3 L1981.9 834.3 L1981.9 875.8 L1940.0 875.8 L1940.0 886.4 L1699.6 886.4 L1699.6 875.8 L1660.8 875.8 Z" fill="#fff" stroke="#1e1e1e"   />
<path d="M1660.8 834.3 L1981.9 834.3 L1981.9 875.8 L1940.0 875.8 L1940.0 886.4 L1699.6 886.4 L1699.6 875.8 L1660.8 875.8 Z" fill="url(#hA)" stroke="#1e1e1e"   />
<path d="M1796.5 834.2 L1796.5 855.1 L1877.0 855.1 L1879.6 841.1 L1890.9 834.3 Z" fill="#fff" stroke="#1e1e1e"   />
<rect x="1749.0" y="835.0" width="40.2" height="37.3" rx="0" fill="#fff" stroke="#1e1e1e"   />
<path d="M1766.4 836.2 L1766.4 871.3" stroke="#555" stroke-width="1.0"  stroke-dasharray="22 5 4 5"/>
<rect x="1737.0" y="872.3" width="64.2" height="14.2" rx="0" fill="#fff" stroke="#1e1e1e"   />
<rect x="1741.9" y="875.1" width="54.7" height="11.4" rx="0" fill="none" stroke="#1e1e1e" stroke-width="1.0"  />
<path d="M1662.4 838.8 L1680.3 838.8 L1680.3 870.0 L1662.4 870.0 Z" fill="#fff" stroke="#1e1e1e" stroke-width="2.2"  />
<path d="M1680.3 847.0 L1738.5 847.0 L1744.5 854.7 L1738.5 862.6 L1680.3 862.6 Z" fill="#fff" stroke="#1e1e1e"   />
<path d="M1683.4 854.7 L1745.7 854.7" stroke="#555" stroke-width="1.0"  stroke-dasharray="22 5 4 5"/>
<path d="M1689.1 847.0 L1689.1 862.6" stroke="#555" stroke-width="1.0"  />
<path d="M1979.8 838.8 L1962.0 838.8 L1962.0 870.0 L1979.8 870.0 Z" fill="#fff" stroke="#1e1e1e" stroke-width="2.2"  />
<path d="M1962.0 847.0 L1903.8 847.0 L1897.7 854.7 L1903.8 862.6 L1962.0 862.6 Z" fill="#fff" stroke="#1e1e1e"   />
<path d="M1958.9 854.7 L1896.6 854.7" stroke="#555" stroke-width="1.0"  stroke-dasharray="22 5 4 5"/>
<path d="M1953.2 847.0 L1953.2 862.6" stroke="#555" stroke-width="1.0"  />
<path d="M1821.1 452.5 L1821.1 892.1" stroke="#333" stroke-width="1.0"  stroke-dasharray="22 5 4 5"/>
<path d="M1647.5 709.1 L1994.7 709.1" stroke="#333" stroke-width="1.0"  stroke-dasharray="22 5 4 5"/>
<text x="1820.0" y="404.5" font-size="15" fill="#444" stroke="none" font-family="Liberation Sans" text-anchor="middle" transform="translate(1820.0 404.5) scale(0.8 1) translate(-1820.0 -404.5)">B–B</text>
<path d="M2044.3 481.6 L1959.6 471.3" stroke="#555" stroke-width="1.0"  />
<circle cx="1959.6" cy="471.3" r="2.4" fill="#111" stroke="none"/>
<text x="2053.2" y="487.6" font-size="12" fill="#666" stroke="none" font-family="Liberation Sans" text-anchor="middle" transform="translate(2053.2 487.6) scale(0.8 1) translate(-2053.2 -487.6)">1</text>
<path d="M1594.0 537.5 L1671.3 555.5" stroke="#555" stroke-width="1.0"  />
<circle cx="1671.3" cy="555.5" r="2.4" fill="#111" stroke="none"/>
<text x="1585.3" y="540.5" font-size="12" fill="#666" stroke="none" font-family="Liberation Sans" text-anchor="middle" transform="translate(1585.3 540.5) scale(0.8 1) translate(-1585.3 -540.5)">15</text>
<path d="M2046.3 539.1 L1970.2 554.3" stroke="#555" stroke-width="1.0"  />
<circle cx="1970.2" cy="554.3" r="2.4" fill="#111" stroke="none"/>
<text x="2055.1" y="542.4" font-size="12" fill="#666" stroke="none" font-family="Liberation Sans" text-anchor="middle" transform="translate(2055.1 542.4) scale(0.8 1) translate(-2055.1 -542.4)">15</text>
<path d="M1594.2 600.0 L1698.5 582.6" stroke="#555" stroke-width="1.0"  />
<circle cx="1698.5" cy="582.6" r="2.4" fill="#111" stroke="none"/>
<text x="1585.3" y="606.5" font-size="12" fill="#666" stroke="none" font-family="Liberation Sans" text-anchor="middle" transform="translate(1585.3 606.5) scale(0.8 1) translate(-1585.3 -606.5)">19</text>
<path d="M2046.2 596.5 L1944.5 581.9" stroke="#555" stroke-width="1.0"  />
<circle cx="1944.5" cy="581.9" r="2.4" fill="#111" stroke="none"/>
<text x="2055.1" y="602.7" font-size="12" fill="#666" stroke="none" font-family="Liberation Sans" text-anchor="middle" transform="translate(2055.1 602.7) scale(0.8 1) translate(-2055.1 -602.7)">19</text>
<path d="M2046.6 628.0 L1960.8 598.5" stroke="#555" stroke-width="1.0"  />
<circle cx="1960.8" cy="598.5" r="2.4" fill="#111" stroke="none"/>
<text x="2055.1" y="635.9" font-size="12" fill="#666" stroke="none" font-family="Liberation Sans" text-anchor="middle" transform="translate(2055.1 635.9) scale(0.8 1) translate(-2055.1 -635.9)">6</text>
<path d="M1594.1 646.0 L1679.6 630.9" stroke="#555" stroke-width="1.0"  />
<circle cx="1679.6" cy="630.9" r="2.4" fill="#111" stroke="none"/>
<text x="1585.3" y="652.5" font-size="12" fill="#666" stroke="none" font-family="Liberation Sans" text-anchor="middle" transform="translate(1585.3 652.5) scale(0.8 1) translate(-1585.3 -652.5)">18</text>
<path d="M2046.6 703.3 L1867.5 638.1" stroke="#555" stroke-width="1.0"  />
<circle cx="1867.5" cy="638.1" r="2.4" fill="#111" stroke="none"/>
<text x="2055.1" y="711.4" font-size="12" fill="#666" stroke="none" font-family="Liberation Sans" text-anchor="middle" transform="translate(2055.1 711.4) scale(0.8 1) translate(-2055.1 -711.4)">8</text>
<path d="M1596.2 719.8 L1678.5 725.3" stroke="#555" stroke-width="1.0"  />
<circle cx="1678.5" cy="725.3" r="2.4" fill="#111" stroke="none"/>
<text x="1587.2" y="724.2" font-size="12" fill="#666" stroke="none" font-family="Liberation Sans" text-anchor="middle" transform="translate(1587.2 724.2) scale(0.8 1) translate(-1587.2 -724.2)">2</text>
<path d="M2046.2 747.7 L1840.8 724.2" stroke="#555" stroke-width="1.0"  />
<circle cx="1840.8" cy="724.2" r="2.4" fill="#111" stroke="none"/>
<text x="2055.1" y="753.7" font-size="12" fill="#666" stroke="none" font-family="Liberation Sans" text-anchor="middle" transform="translate(2055.1 753.7) scale(0.8 1) translate(-2055.1 -753.7)">3</text>
<path d="M2046.1 792.6 L1958.9 786.4" stroke="#555" stroke-width="1.0"  />
<circle cx="1958.9" cy="786.4" r="2.4" fill="#111" stroke="none"/>
<text x="2055.1" y="798.2" font-size="12" fill="#666" stroke="none" font-family="Liberation Sans" text-anchor="middle" transform="translate(2055.1 798.2) scale(0.8 1) translate(-2055.1 -798.2)">18</text>
<path d="M1596.1 798.5 L1679.6 805.3" stroke="#555" stroke-width="1.0"  />
<circle cx="1679.6" cy="805.3" r="2.4" fill="#111" stroke="none"/>
<text x="1587.2" y="802.7" font-size="12" fill="#666" stroke="none" font-family="Liberation Sans" text-anchor="middle" transform="translate(1587.2 802.7) scale(0.8 1) translate(-1587.2 -802.7)">6</text>
<path d="M1595.7 844.0 L1728.7 801.5" stroke="#555" stroke-width="1.0"  />
<circle cx="1728.7" cy="801.5" r="2.4" fill="#111" stroke="none"/>
<text x="1587.2" y="851.8" font-size="12" fill="#666" stroke="none" font-family="Liberation Sans" text-anchor="middle" transform="translate(1587.2 851.8) scale(0.8 1) translate(-1587.2 -851.8)">9</text>
<path d="M2046.5 840.4 L1915.5 800.8" stroke="#555" stroke-width="1.0"  />
<circle cx="1915.5" cy="800.8" r="2.4" fill="#111" stroke="none"/>
<text x="2055.1" y="848.0" font-size="12" fill="#666" stroke="none" font-family="Liberation Sans" text-anchor="middle" transform="translate(2055.1 848.0) scale(0.8 1) translate(-2055.1 -848.0)">9</text>
<path d="M1594.0 880.5 L1671.3 861.9" stroke="#555" stroke-width="1.0"  />
<circle cx="1671.3" cy="861.9" r="2.4" fill="#111" stroke="none"/>
<text x="1585.3" y="887.6" font-size="12" fill="#666" stroke="none" font-family="Liberation Sans" text-anchor="middle" transform="translate(1585.3 887.6) scale(0.8 1) translate(-1585.3 -887.6)">15</text>
<path d="M2046.4 880.5 L1970.2 861.9" stroke="#555" stroke-width="1.0"  />
<circle cx="1970.2" cy="861.9" r="2.4" fill="#111" stroke="none"/>
<text x="2055.1" y="887.6" font-size="12" fill="#666" stroke="none" font-family="Liberation Sans" text-anchor="middle" transform="translate(2055.1 887.6) scale(0.8 1) translate(-2055.1 -887.6)">15</text>
<path d="M1750.0 896.9 L1755.8 881.5" stroke="#555" stroke-width="1.0"  />
<circle cx="1755.8" cy="881.5" r="2.4" fill="#111" stroke="none"/>
<text x="1746.8" y="910.3" font-size="12" fill="#666" stroke="none" font-family="Liberation Sans" text-anchor="middle" transform="translate(1746.8 910.3) scale(0.8 1) translate(-1746.8 -910.3)">13</text>
<path d="M1796.4 896.5 L1790.9 874.0" stroke="#555" stroke-width="1.0"  />
<circle cx="1790.9" cy="874.0" r="2.4" fill="#111" stroke="none"/>
<text x="1798.5" y="910.3" font-size="12" fill="#666" stroke="none" font-family="Liberation Sans" text-anchor="middle" transform="translate(1798.5 910.3) scale(0.8 1) translate(-1798.5 -910.3)">14</text>
<path d="M941.0 1123.9 L941.0 1088.6 L983.3 1088.6 L983.3 1081.7 L1046.0 1081.7 L1047.4 1077.5 L1170.3 1077.5 L1171.7 1081.7 L1231.1 1081.7 L1231.1 1088.6 L1274.5 1088.6 L1274.5 1123.9" fill="none" stroke="#1e1e1e"   />
<path d="M941.0 1374.0 L941.0 1409.4 L983.3 1409.4 L983.3 1416.3 L1046.0 1416.3 L1047.4 1420.4 L1170.3 1420.4 L1171.7 1416.3 L1231.1 1416.3 L1231.1 1409.4 L1274.5 1409.4 L1274.5 1374.0" fill="none" stroke="#1e1e1e"   />
<path d="M936.8 1123.9 L1278.1 1123.9 L1282.2 1132.2 L1282.2 1365.7 L1278.1 1374.0 L936.8 1374.0 L934.1 1365.7 L865.0 1331.2 L849.8 1309.1 L849.8 1188.9 L865.0 1172.3 L934.1 1133.6 Z" fill="#fff" stroke="#1e1e1e"   />
<path d="M957.3 1193.6 A160.3 160.3 0 1 1 957.3 1303.0 Q953.4 1295.3 951.7 1286.7 Q947.9 1284.2 942.4 1284.2 L891.3 1284.2 A35.9 35.9 0 0 1 891.3 1212.5 L942.4 1212.5 Q947.9 1212.4 951.7 1209.9 Q953.4 1201.3 957.3 1193.6 Z" fill="#fff" stroke="#1e1e1e" stroke-width="1.7"/>
<path d="M1004.5 1308.4 A139.5 139.5 0 0 0 1004.5 1188.2" fill="none" stroke="none"/>
<circle cx="1108.2" cy="1248.3" r="139.5" fill="none" stroke="#333" stroke-width="1.0" stroke-dasharray="22 5 4 5"/>
<path d="M1004.5 1188.2 A118.8 118.8 0 1 1 1004.5 1308.4 C997.6 1292.5 995.4 1282.0 993.7 1278.7 Q990.7 1271.0 986.9 1267.9 Q997.6 1262.1 996.3 1248.3 Q997.6 1234.5 986.9 1228.6 Q990.7 1225.6 993.7 1217.8 C995.4 1214.6 997.6 1204.1 1004.5 1188.2 Z" fill="#fff" stroke="#1e1e1e" stroke-width="1.7"/>
<path d="M1000.4 1190.3 A69.1 69.1 0 0 1 1000.4 1306.3" fill="none" stroke="#333" stroke-width="1.0"/>
<path d="M1003.2 1188.9 A71.3 71.3 0 0 1 1003.2 1307.7" fill="none" stroke="#1e1e1e" stroke-width="1.7"/>
<circle cx="891.3" cy="1248.3" r="28.2" fill="none" stroke="#1e1e1e"   />
<circle cx="891.3" cy="1248.3" r="9.9" fill="none" stroke="#1e1e1e" stroke-width="2.6"  />
<path d="M891.3 1217.9 L891.3 1278.7" stroke="#444" stroke-width="1.0"  />
<circle cx="970.0" cy="1248.3" r="16.6" fill="none" stroke="#1e1e1e" stroke-width="1.7"  />
<circle cx="970.0" cy="1248.3" r="13.3" fill="none" stroke="#1e1e1e" stroke-width="2.4"  />
<circle cx="970.0" cy="1248.3" r="9.7" fill="none" stroke="#1e1e1e" stroke-width="1.7"  />
<circle cx="970.0" cy="1248.3" r="5.5" fill="none" stroke="#1e1e1e" stroke-width="1.7"  />
<path d="M1058.4 1140.5 L1058.4 1356.1" stroke="#1e1e1e"   />
<path d="M1058.4 1172.3 L1207.6 1172.3" stroke="#1e1e1e"   />
<path d="M1058.4 1183.4 L1202.1 1183.4" stroke="#1e1e1e"   />
<path d="M1058.4 1212.4 L1202.1 1212.4" stroke="#1e1e1e"   />
<path d="M1058.4 1285.6 L1202.1 1285.6" stroke="#1e1e1e"   />
<path d="M1058.4 1314.6 L1202.1 1314.6" stroke="#1e1e1e"   />
<path d="M1058.4 1324.3 L1207.6 1324.3" stroke="#1e1e1e"   />
<path d="M1188.3 1183.4 L1188.3 1314.6" stroke="#1e1e1e"   />
<path d="M1084.7 1132.2 L1131.6 1132.2 L1122.0 1193.0 L1094.3 1193.0 Z" fill="#fff" stroke="#1e1e1e"   />
<path d="M1084.7 1365.7 L1131.6 1365.7 L1122.0 1304.9 L1094.3 1304.9 Z" fill="#fff" stroke="#1e1e1e"   />
<path d="M1209.0 1213.8 Q1191.1 1248.3 1209.0 1284.2 M1215.9 1217.9 Q1199.3 1248.3 1215.9 1280.1" fill="none" stroke="#1e1e1e" stroke-width="1.7"/>
<circle cx="1008.7" cy="1150.2" r="7.7" fill="#fff" stroke="#1e1e1e" stroke-width="2.6"  />
<circle cx="1008.7" cy="1150.2" r="4.4" fill="none" stroke="#1e1e1e" stroke-width="1.0"  />
<circle cx="1207.1" cy="1150.2" r="7.7" fill="#fff" stroke="#1e1e1e" stroke-width="2.6"  />
<circle cx="1207.1" cy="1150.2" r="4.4" fill="none" stroke="#1e1e1e" stroke-width="1.0"  />
<circle cx="1008.7" cy="1347.8" r="7.7" fill="#fff" stroke="#1e1e1e" stroke-width="2.6"  />
<circle cx="1008.7" cy="1347.8" r="4.4" fill="none" stroke="#1e1e1e" stroke-width="1.0"  />
<circle cx="1207.1" cy="1347.8" r="7.7" fill="#fff" stroke="#1e1e1e" stroke-width="2.6"  />
<circle cx="1207.1" cy="1347.8" r="4.4" fill="none" stroke="#1e1e1e" stroke-width="1.0"  />
<path d="M1108.2 1071.4 L1108.2 1425.1" stroke="#333" stroke-width="1.0"  stroke-dasharray="22 5 4 5"/>
<path d="M801.4 1248.3 L1332.0 1248.3" stroke="#333" stroke-width="1.0"  stroke-dasharray="22 5 4 5"/>
<path d="M801.4 1248.3 L826.3 1248.3" stroke="#1e1e1e" stroke-width="2.2"  />
<path d="M1301.6 1248.3 L1332.0 1248.3" stroke="#1e1e1e" stroke-width="2.2"  />
<path d="M812.5 1251.1 L812.5 1274.5" stroke="#1e1e1e" stroke-width="1.4"  />
<path d="M1320.9 1251.1 L1320.9 1274.5" stroke="#1e1e1e" stroke-width="1.4"  />
<path d="M812.5 1251.1 l-3 8 h6z M1320.9 1251.1 l-3 8 h6z" fill="#111" stroke="none"/>
<text x="790.4" y="1266.3" font-size="16" fill="#333" stroke="none" font-family="Liberation Sans" text-anchor="middle" transform="translate(790.4 1266.3) scale(0.8 1) translate(-790.4 -1266.3)">A</text>
<text x="1340.3" y="1266.3" font-size="16" fill="#333" stroke="none" font-family="Liberation Sans" text-anchor="middle" transform="translate(1340.3 1266.3) scale(0.8 1) translate(-1340.3 -1266.3)">A</text>
<path d="M1336.1 1072.0 L1254.6 1104.6" stroke="#555" stroke-width="1.0"  />
<circle cx="1254.6" cy="1104.6" r="2.4" fill="#111" stroke="none"/>
<text x="1344.4" y="1073.7" font-size="12" fill="#666" stroke="none" font-family="Liberation Sans" text-anchor="middle" transform="translate(1344.4 1073.7) scale(0.8 1) translate(-1344.4 -1073.7)">6</text>
<path d="M1335.9 1107.4 L1207.1 1150.2" stroke="#555" stroke-width="1.0"  />
<circle cx="1207.1" cy="1150.2" r="2.4" fill="#111" stroke="none"/>
<text x="1344.4" y="1109.6" font-size="12" fill="#666" stroke="none" font-family="Liberation Sans" text-anchor="middle" transform="translate(1344.4 1109.6) scale(0.8 1) translate(-1344.4 -1109.6)">21</text>
<path d="M1335.6 1147.9 L1193.3 1177.8" stroke="#555" stroke-width="1.0"  />
<circle cx="1193.3" cy="1177.8" r="2.4" fill="#111" stroke="none"/>
<text x="1344.4" y="1151.1" font-size="12" fill="#666" stroke="none" font-family="Liberation Sans" text-anchor="middle" transform="translate(1344.4 1151.1) scale(0.8 1) translate(-1344.4 -1151.1)">9</text>
<path d="M1335.4 1205.0 L1171.7 1196.3" stroke="#555" stroke-width="1.0"  />
<circle cx="1171.7" cy="1196.3" r="2.4" fill="#111" stroke="none"/>
<text x="1344.4" y="1210.5" font-size="12" fill="#666" stroke="none" font-family="Liberation Sans" text-anchor="middle" transform="translate(1344.4 1210.5) scale(0.8 1) translate(-1344.4 -1210.5)">8</text>
<path d="M1335.4 1234.1 L1186.4 1227.6" stroke="#555" stroke-width="1.0"  />
<circle cx="1186.4" cy="1227.6" r="2.4" fill="#111" stroke="none"/>
<text x="1344.4" y="1239.5" font-size="12" fill="#666" stroke="none" font-family="Liberation Sans" text-anchor="middle" transform="translate(1344.4 1239.5) scale(0.8 1) translate(-1344.4 -1239.5)">3</text>
<path d="M1335.5 1325.7 L1166.7 1300.2" stroke="#555" stroke-width="1.0"  />
<circle cx="1166.7" cy="1300.2" r="2.4" fill="#111" stroke="none"/>
<text x="1344.4" y="1332.0" font-size="12" fill="#666" stroke="none" font-family="Liberation Sans" text-anchor="middle" transform="translate(1344.4 1332.0) scale(0.8 1) translate(-1344.4 -1332.0)">2</text>
<path d="M1336.0 1370.9 L1192.4 1318.8" stroke="#555" stroke-width="1.0"  />
<circle cx="1192.4" cy="1318.8" r="2.4" fill="#111" stroke="none"/>
<text x="1344.4" y="1379.0" font-size="12" fill="#666" stroke="none" font-family="Liberation Sans" text-anchor="middle" transform="translate(1344.4 1379.0) scale(0.8 1) translate(-1344.4 -1379.0)">9</text>
<path d="M794.5 1121.5 L1007.3 1213.8" stroke="#555" stroke-width="1.0"  />
<circle cx="1007.3" cy="1213.8" r="2.4" fill="#111" stroke="none"/>
<text x="786.3" y="1122.9" font-size="12" fill="#666" stroke="none" font-family="Liberation Sans" text-anchor="middle" transform="translate(786.3 1122.9) scale(0.8 1) translate(-786.3 -1122.9)">5</text>
<path d="M793.4 1172.4 L986.0 1235.9" stroke="#555" stroke-width="1.0"  />
<circle cx="986.0" cy="1235.9" r="2.4" fill="#111" stroke="none"/>
<text x="784.9" y="1174.5" font-size="12" fill="#666" stroke="none" font-family="Liberation Sans" text-anchor="middle" transform="translate(784.9 1174.5) scale(0.8 1) translate(-784.9 -1174.5)">17</text>
<path d="M793.6 1215.8 L877.4 1235.9" stroke="#555" stroke-width="1.0"  />
<circle cx="877.4" cy="1235.9" r="2.4" fill="#111" stroke="none"/>
<text x="784.9" y="1218.8" font-size="12" fill="#666" stroke="none" font-family="Liberation Sans" text-anchor="middle" transform="translate(784.9 1218.8) scale(0.8 1) translate(-784.9 -1218.8)">13</text>
<path d="M792.9 1340.9 L953.4 1259.3" stroke="#555" stroke-width="1.0"  />
<circle cx="953.4" cy="1259.3" r="2.4" fill="#111" stroke="none"/>
<text x="784.9" y="1350.0" font-size="12" fill="#666" stroke="none" font-family="Liberation Sans" text-anchor="middle" transform="translate(784.9 1350.0) scale(0.8 1) translate(-784.9 -1350.0)">16</text>
<path d="M795.8 1402.0 L931.3 1338.9" stroke="#555" stroke-width="1.0"  />
<circle cx="931.3" cy="1338.9" r="2.4" fill="#111" stroke="none"/>
<text x="787.6" y="1410.8" font-size="12" fill="#666" stroke="none" font-family="Liberation Sans" text-anchor="middle" transform="translate(787.6 1410.8) scale(0.8 1) translate(-787.6 -1410.8)">1</text>
<path d="M1729 1532.5 L1729 919.3 L2255 919.3 L2255 1532.5 Z" fill="none" stroke="#1a1a1a" stroke-width="2.6"/>
<path d="M1733.0 924.4 L2249.6 924.4" stroke="#6a6a6a" stroke-width="1.5"  />
<path d="M1733.0 941.7 L2249.6 941.7" stroke="#6a6a6a" stroke-width="1.5"  />
<path d="M1733.0 963.9 L2249.6 963.9" stroke="#6a6a6a" stroke-width="1.5"  />
<path d="M1733.0 985.9 L2249.6 985.9" stroke="#6a6a6a" stroke-width="1.5"  />
<path d="M1733.0 1007.9 L2249.6 1007.9" stroke="#6a6a6a" stroke-width="1.5"  />
<path d="M1733.0 1030.0 L2249.6 1030.0" stroke="#6a6a6a" stroke-width="1.5"  />
<path d="M1733.0 1052.0 L2249.6 1052.0" stroke="#6a6a6a" stroke-width="1.5"  />
<path d="M1733.0 1074.0 L2249.6 1074.0" stroke="#6a6a6a" stroke-width="1.5"  />
<path d="M1733.0 1096.0 L2249.6 1096.0" stroke="#6a6a6a" stroke-width="1.5"  />
<path d="M1733.0 1118.1 L2249.6 1118.1" stroke="#6a6a6a" stroke-width="1.5"  />
<path d="M1733.0 1140.1 L2249.6 1140.1" stroke="#6a6a6a" stroke-width="1.5"  />
<path d="M1733.0 1162.1 L2249.6 1162.1" stroke="#6a6a6a" stroke-width="1.5"  />
<path d="M1733.0 1184.1 L2249.6 1184.1" stroke="#6a6a6a" stroke-width="1.5"  />
<path d="M1733.0 1206.2 L2249.6 1206.2" stroke="#6a6a6a" stroke-width="1.5"  />
<path d="M1733.0 1228.2 L2249.6 1228.2" stroke="#6a6a6a" stroke-width="1.5"  />
<path d="M1733.0 1250.2 L2249.6 1250.2" stroke="#6a6a6a" stroke-width="1.5"  />
<path d="M1733.0 1272.2 L2249.6 1272.2" stroke="#6a6a6a" stroke-width="1.5"  />
<path d="M1733.0 1294.3 L2249.6 1294.3" stroke="#6a6a6a" stroke-width="1.5"  />
<path d="M1733.0 1316.3 L2249.6 1316.3" stroke="#6a6a6a" stroke-width="1.5"  />
<path d="M1733.0 1338.3 L2249.6 1338.3" stroke="#6a6a6a" stroke-width="1.5"  />
<path d="M1733.0 1360.3 L2249.6 1360.3" stroke="#6a6a6a" stroke-width="1.5"  />
<path d="M1733.0 1382.4 L2249.6 1382.4" stroke="#6a6a6a" stroke-width="1.5"  />
<path d="M1733.0 1404.4 L2249.6 1404.4" stroke="#6a6a6a" stroke-width="1.5"  />
<path d="M1733.0 1426.4 L2249.6 1426.4" stroke="#6a6a6a" stroke-width="1.5"  />
<path d="M1733.0 924.4 L1733.0 1426.4" stroke="#555" stroke-width="1.6"  />
<path d="M1758.2 924.4 L1758.2 1426.4" stroke="#555" stroke-width="1.6"  />
<path d="M1789.2 924.4 L1789.2 1426.4" stroke="#555" stroke-width="1.6"  />
<path d="M1819.4 924.4 L1819.4 1426.4" stroke="#555" stroke-width="1.6"  />
<path d="M2014.7 924.4 L2014.7 1426.4" stroke="#555" stroke-width="1.6"  />
<path d="M2164.2 924.4 L2164.2 1426.4" stroke="#555" stroke-width="1.6"  />
<path d="M2249.6 924.4 L2249.6 1426.4" stroke="#555" stroke-width="1.6"  />
<text x="1745.6" y="937.0" font-size="10" fill="#555" stroke="none" font-family="Liberation Sans" text-anchor="middle" transform="translate(1745.6 937.0) scale(0.72 1) translate(-1745.6 -937.0)">1</text>
<text x="1773.7" y="937.0" font-size="10" fill="#555" stroke="none" font-family="Liberation Sans" text-anchor="middle" transform="translate(1773.7 937.0) scale(0.72 1) translate(-1773.7 -937.0)">2</text>
<text x="1804.3" y="937.0" font-size="10" fill="#555" stroke="none" font-family="Liberation Sans" text-anchor="middle" transform="translate(1804.3 937.0) scale(0.72 1) translate(-1804.3 -937.0)">3</text>
<text x="1917.1" y="937.0" font-size="10" fill="#555" stroke="none" font-family="Liberation Sans" text-anchor="middle" transform="translate(1917.1 937.0) scale(0.72 1) translate(-1917.1 -937.0)">4</text>
<text x="2089.4" y="937.0" font-size="10" fill="#555" stroke="none" font-family="Liberation Sans" text-anchor="middle" transform="translate(2089.4 937.0) scale(0.72 1) translate(-2089.4 -937.0)">5</text>
<text x="2206.9" y="937.0" font-size="10" fill="#555" stroke="none" font-family="Liberation Sans" text-anchor="middle" transform="translate(2206.9 937.0) scale(0.72 1) translate(-2206.9 -937.0)">6</text>
<text x="1745.6" y="957.0" font-size="9" fill="#666" stroke="none" font-family="Liberation Sans" text-anchor="middle" transform="translate(1745.6 957.0) scale(0.62 1) translate(-1745.6 -957.0)">Pos.</text>
<text x="1773.7" y="957.0" font-size="9" fill="#666" stroke="none" font-family="Liberation Sans" text-anchor="middle" transform="translate(1773.7 957.0) scale(0.62 1) translate(-1773.7 -957.0)">Menge</text>
<text x="1804.3" y="957.0" font-size="9" fill="#666" stroke="none" font-family="Liberation Sans" text-anchor="middle" transform="translate(1804.3 957.0) scale(0.62 1) translate(-1804.3 -957.0)">Einheit</text>
<text x="1917.1" y="957.0" font-size="9" fill="#666" stroke="none" font-family="Liberation Sans" text-anchor="middle" transform="translate(1917.1 957.0) scale(0.62 1) translate(-1917.1 -957.0)">Benennung</text>
<text x="2089.4" y="957.0" font-size="9" fill="#666" stroke="none" font-family="Liberation Sans" text-anchor="middle" transform="translate(2089.4 957.0) scale(0.62 1) translate(-2089.4 -957.0)">Sachnummer / Norm - Kurzbezeichnung</text>
<text x="2206.9" y="957.0" font-size="9" fill="#666" stroke="none" font-family="Liberation Sans" text-anchor="middle" transform="translate(2206.9 957.0) scale(0.62 1) translate(-2206.9 -957.0)">Bemerkung</text>
<text x="1745.6" y="980.4" font-size="13" fill="#444" stroke="none" font-family="Liberation Sans" text-anchor="middle" transform="translate(1745.6 980.4) scale(0.72 1) translate(-1745.6 -980.4)">1</text>
<text x="1773.7" y="980.4" font-size="13" fill="#444" stroke="none" font-family="Liberation Sans" text-anchor="middle" transform="translate(1773.7 980.4) scale(0.72 1) translate(-1773.7 -980.4)">1</text>
<text x="1791.2" y="980.4" font-size="13" fill="#444" stroke="none" font-family="Liberation Sans" text-anchor="start" transform="translate(1791.2 980.4) scale(0.72 1) translate(-1791.2 -980.4)">Stck.</text>
<text x="1821.4" y="980.4" font-size="13" fill="#444" stroke="none" font-family="Liberation Sans" text-anchor="start" transform="translate(1821.4 980.4) scale(0.72 1) translate(-1821.4 -980.4)">Gehäuse</text>
<text x="2166.2" y="980.4" font-size="13" fill="#444" stroke="none" font-family="Liberation Sans" text-anchor="start" transform="translate(2166.2 980.4) scale(0.72 1) translate(-2166.2 -980.4)">G — AlSi10Mg</text>
<text x="1745.6" y="1002.4" font-size="13" fill="#444" stroke="none" font-family="Liberation Sans" text-anchor="middle" transform="translate(1745.6 1002.4) scale(0.72 1) translate(-1745.6 -1002.4)">2</text>
<text x="1773.7" y="1002.4" font-size="13" fill="#444" stroke="none" font-family="Liberation Sans" text-anchor="middle" transform="translate(1773.7 1002.4) scale(0.72 1) translate(-1773.7 -1002.4)">1</text>
<text x="1791.2" y="1002.4" font-size="13" fill="#444" stroke="none" font-family="Liberation Sans" text-anchor="start" transform="translate(1791.2 1002.4) scale(0.72 1) translate(-1791.2 -1002.4)">Stck.</text>
<text x="1821.4" y="1002.4" font-size="13" fill="#444" stroke="none" font-family="Liberation Sans" text-anchor="start" transform="translate(1821.4 1002.4) scale(0.72 1) translate(-1821.4 -1002.4)">Hohlwelle</text>
<text x="2166.2" y="1002.4" font-size="13" fill="#444" stroke="none" font-family="Liberation Sans" text-anchor="start" transform="translate(2166.2 1002.4) scale(0.72 1) translate(-2166.2 -1002.4)">34CrMo4</text>
<text x="1745.6" y="1024.4" font-size="13" fill="#444" stroke="none" font-family="Liberation Sans" text-anchor="middle" transform="translate(1745.6 1024.4) scale(0.72 1) translate(-1745.6 -1024.4)">3</text>
<text x="1773.7" y="1024.4" font-size="13" fill="#444" stroke="none" font-family="Liberation Sans" text-anchor="middle" transform="translate(1773.7 1024.4) scale(0.72 1) translate(-1773.7 -1024.4)">1</text>
<text x="1791.2" y="1024.4" font-size="13" fill="#444" stroke="none" font-family="Liberation Sans" text-anchor="start" transform="translate(1791.2 1024.4) scale(0.72 1) translate(-1791.2 -1024.4)">Stck.</text>
<text x="1821.4" y="1024.4" font-size="13" fill="#444" stroke="none" font-family="Liberation Sans" text-anchor="start" transform="translate(1821.4 1024.4) scale(0.72 1) translate(-1821.4 -1024.4)">Schneckenrad</text>
<text x="2166.2" y="1024.4" font-size="13" fill="#444" stroke="none" font-family="Liberation Sans" text-anchor="start" transform="translate(2166.2 1024.4) scale(0.72 1) translate(-2166.2 -1024.4)">G — CuSn12Ni</text>
<text x="1745.6" y="1046.5" font-size="13" fill="#444" stroke="none" font-family="Liberation Sans" text-anchor="middle" transform="translate(1745.6 1046.5) scale(0.72 1) translate(-1745.6 -1046.5)">4</text>
<text x="1773.7" y="1046.5" font-size="13" fill="#444" stroke="none" font-family="Liberation Sans" text-anchor="middle" transform="translate(1773.7 1046.5) scale(0.72 1) translate(-1773.7 -1046.5)">1</text>
<text x="1791.2" y="1046.5" font-size="13" fill="#444" stroke="none" font-family="Liberation Sans" text-anchor="start" transform="translate(1791.2 1046.5) scale(0.72 1) translate(-1791.2 -1046.5)">Stck.</text>
<text x="1821.4" y="1046.5" font-size="13" fill="#444" stroke="none" font-family="Liberation Sans" text-anchor="start" transform="translate(1821.4 1046.5) scale(0.72 1) translate(-1821.4 -1046.5)">Schneckenwelle</text>
<text x="2166.2" y="1046.5" font-size="13" fill="#444" stroke="none" font-family="Liberation Sans" text-anchor="start" transform="translate(2166.2 1046.5) scale(0.72 1) translate(-2166.2 -1046.5)">16MnCr5</text>
<text x="1745.6" y="1068.5" font-size="13" fill="#444" stroke="none" font-family="Liberation Sans" text-anchor="middle" transform="translate(1745.6 1068.5) scale(0.72 1) translate(-1745.6 -1068.5)">5</text>
<text x="1773.7" y="1068.5" font-size="13" fill="#444" stroke="none" font-family="Liberation Sans" text-anchor="middle" transform="translate(1773.7 1068.5) scale(0.72 1) translate(-1773.7 -1068.5)">1</text>
<text x="1791.2" y="1068.5" font-size="13" fill="#444" stroke="none" font-family="Liberation Sans" text-anchor="start" transform="translate(1791.2 1068.5) scale(0.72 1) translate(-1791.2 -1068.5)">Stck.</text>
<text x="1821.4" y="1068.5" font-size="13" fill="#444" stroke="none" font-family="Liberation Sans" text-anchor="start" transform="translate(1821.4 1068.5) scale(0.72 1) translate(-1821.4 -1068.5)">Zahnrad</text>
<text x="2166.2" y="1068.5" font-size="13" fill="#444" stroke="none" font-family="Liberation Sans" text-anchor="start" transform="translate(2166.2 1068.5) scale(0.72 1) translate(-2166.2 -1068.5)">16MnCr5</text>
<text x="1745.6" y="1090.5" font-size="13" fill="#444" stroke="none" font-family="Liberation Sans" text-anchor="middle" transform="translate(1745.6 1090.5) scale(0.72 1) translate(-1745.6 -1090.5)">6</text>
<text x="1773.7" y="1090.5" font-size="13" fill="#444" stroke="none" font-family="Liberation Sans" text-anchor="middle" transform="translate(1773.7 1090.5) scale(0.72 1) translate(-1773.7 -1090.5)">2</text>
<text x="1791.2" y="1090.5" font-size="13" fill="#444" stroke="none" font-family="Liberation Sans" text-anchor="start" transform="translate(1791.2 1090.5) scale(0.72 1) translate(-1791.2 -1090.5)">Stck.</text>
<text x="1821.4" y="1090.5" font-size="13" fill="#444" stroke="none" font-family="Liberation Sans" text-anchor="start" transform="translate(1821.4 1090.5) scale(0.72 1) translate(-1821.4 -1090.5)">Lagerdeckel groß</text>
<text x="2166.2" y="1090.5" font-size="13" fill="#444" stroke="none" font-family="Liberation Sans" text-anchor="start" transform="translate(2166.2 1090.5) scale(0.72 1) translate(-2166.2 -1090.5)">S235JR</text>
<text x="1745.6" y="1112.5" font-size="13" fill="#444" stroke="none" font-family="Liberation Sans" text-anchor="middle" transform="translate(1745.6 1112.5) scale(0.72 1) translate(-1745.6 -1112.5)">7</text>
<text x="1773.7" y="1112.5" font-size="13" fill="#444" stroke="none" font-family="Liberation Sans" text-anchor="middle" transform="translate(1773.7 1112.5) scale(0.72 1) translate(-1773.7 -1112.5)">1</text>
<text x="1791.2" y="1112.5" font-size="13" fill="#444" stroke="none" font-family="Liberation Sans" text-anchor="start" transform="translate(1791.2 1112.5) scale(0.72 1) translate(-1791.2 -1112.5)">Stck.</text>
<text x="1821.4" y="1112.5" font-size="13" fill="#444" stroke="none" font-family="Liberation Sans" text-anchor="start" transform="translate(1821.4 1112.5) scale(0.72 1) translate(-1821.4 -1112.5)">Lagerdeckel klein</text>
<text x="2166.2" y="1112.5" font-size="13" fill="#444" stroke="none" font-family="Liberation Sans" text-anchor="start" transform="translate(2166.2 1112.5) scale(0.72 1) translate(-2166.2 -1112.5)">S235JR</text>
<text x="1745.6" y="1134.6" font-size="13" fill="#444" stroke="none" font-family="Liberation Sans" text-anchor="middle" transform="translate(1745.6 1134.6) scale(0.72 1) translate(-1745.6 -1134.6)">8</text>
<text x="1773.7" y="1134.6" font-size="13" fill="#444" stroke="none" font-family="Liberation Sans" text-anchor="middle" transform="translate(1773.7 1134.6) scale(0.72 1) translate(-1773.7 -1134.6)">1</text>
<text x="1791.2" y="1134.6" font-size="13" fill="#444" stroke="none" font-family="Liberation Sans" text-anchor="start" transform="translate(1791.2 1134.6) scale(0.72 1) translate(-1791.2 -1134.6)">Stck.</text>
<text x="1821.4" y="1134.6" font-size="13" fill="#444" stroke="none" font-family="Liberation Sans" text-anchor="start" transform="translate(1821.4 1134.6) scale(0.72 1) translate(-1821.4 -1134.6)">Distanzring</text>
<text x="2166.2" y="1134.6" font-size="13" fill="#444" stroke="none" font-family="Liberation Sans" text-anchor="start" transform="translate(2166.2 1134.6) scale(0.72 1) translate(-2166.2 -1134.6)">S235JR</text>
<text x="1745.6" y="1156.6" font-size="13" fill="#444" stroke="none" font-family="Liberation Sans" text-anchor="middle" transform="translate(1745.6 1156.6) scale(0.72 1) translate(-1745.6 -1156.6)">9</text>
<text x="1773.7" y="1156.6" font-size="13" fill="#444" stroke="none" font-family="Liberation Sans" text-anchor="middle" transform="translate(1773.7 1156.6) scale(0.72 1) translate(-1773.7 -1156.6)">2</text>
<text x="1791.2" y="1156.6" font-size="13" fill="#444" stroke="none" font-family="Liberation Sans" text-anchor="start" transform="translate(1791.2 1156.6) scale(0.72 1) translate(-1791.2 -1156.6)">Stck.</text>
<text x="1821.4" y="1156.6" font-size="13" fill="#444" stroke="none" font-family="Liberation Sans" text-anchor="start" transform="translate(1821.4 1156.6) scale(0.72 1) translate(-1821.4 -1156.6)">Rillenkugellager</text>
<text x="2016.7" y="1156.6" font-size="13" fill="#444" stroke="none" font-family="Liberation Sans" text-anchor="start" transform="translate(2016.7 1156.6) scale(0.72 1) translate(-2016.7 -1156.6)">DIN 625 — 6009</text>
<text x="1745.6" y="1178.6" font-size="13" fill="#444" stroke="none" font-family="Liberation Sans" text-anchor="middle" transform="translate(1745.6 1178.6) scale(0.72 1) translate(-1745.6 -1178.6)">10</text>
<text x="1773.7" y="1178.6" font-size="13" fill="#444" stroke="none" font-family="Liberation Sans" text-anchor="middle" transform="translate(1773.7 1178.6) scale(0.72 1) translate(-1773.7 -1178.6)">2</text>
<text x="1791.2" y="1178.6" font-size="13" fill="#444" stroke="none" font-family="Liberation Sans" text-anchor="start" transform="translate(1791.2 1178.6) scale(0.72 1) translate(-1791.2 -1178.6)">Stck.</text>
<text x="1821.4" y="1178.6" font-size="13" fill="#444" stroke="none" font-family="Liberation Sans" text-anchor="start" transform="translate(1821.4 1178.6) scale(0.72 1) translate(-1821.4 -1178.6)">Kegelrollenlager</text>
<text x="2016.7" y="1178.6" font-size="13" fill="#444" stroke="none" font-family="Liberation Sans" text-anchor="start" transform="translate(2016.7 1178.6) scale(0.72 1) translate(-2016.7 -1178.6)">DIN 720 — 30203</text>
<text x="1745.6" y="1200.6" font-size="13" fill="#444" stroke="none" font-family="Liberation Sans" text-anchor="middle" transform="translate(1745.6 1200.6) scale(0.72 1) translate(-1745.6 -1200.6)">11</text>
<text x="1773.7" y="1200.6" font-size="13" fill="#444" stroke="none" font-family="Liberation Sans" text-anchor="middle" transform="translate(1773.7 1200.6) scale(0.72 1) translate(-1773.7 -1200.6)">1</text>
<text x="1791.2" y="1200.6" font-size="13" fill="#444" stroke="none" font-family="Liberation Sans" text-anchor="start" transform="translate(1791.2 1200.6) scale(0.72 1) translate(-1791.2 -1200.6)">Stck.</text>
<text x="1821.4" y="1200.6" font-size="13" fill="#444" stroke="none" font-family="Liberation Sans" text-anchor="start" transform="translate(1821.4 1200.6) scale(0.72 1) translate(-1821.4 -1200.6)">Passfeder groß</text>
<text x="2016.7" y="1200.6" font-size="13" fill="#444" stroke="none" font-family="Liberation Sans" text-anchor="start" transform="translate(2016.7 1200.6) scale(0.72 1) translate(-2016.7 -1200.6)">DIN 6885 — B 12 x 8 x 22</text>
<text x="1745.6" y="1222.7" font-size="13" fill="#444" stroke="none" font-family="Liberation Sans" text-anchor="middle" transform="translate(1745.6 1222.7) scale(0.72 1) translate(-1745.6 -1222.7)">12</text>
<text x="1773.7" y="1222.7" font-size="13" fill="#444" stroke="none" font-family="Liberation Sans" text-anchor="middle" transform="translate(1773.7 1222.7) scale(0.72 1) translate(-1773.7 -1222.7)">1</text>
<text x="1791.2" y="1222.7" font-size="13" fill="#444" stroke="none" font-family="Liberation Sans" text-anchor="start" transform="translate(1791.2 1222.7) scale(0.72 1) translate(-1791.2 -1222.7)">Stck.</text>
<text x="1821.4" y="1222.7" font-size="13" fill="#444" stroke="none" font-family="Liberation Sans" text-anchor="start" transform="translate(1821.4 1222.7) scale(0.72 1) translate(-1821.4 -1222.7)">Passfeder klein</text>
<text x="2016.7" y="1222.7" font-size="13" fill="#444" stroke="none" font-family="Liberation Sans" text-anchor="start" transform="translate(2016.7 1222.7) scale(0.72 1) translate(-2016.7 -1222.7)">DIN 6885 — B 5 x 5 x 10</text>
<text x="1745.6" y="1244.7" font-size="13" fill="#444" stroke="none" font-family="Liberation Sans" text-anchor="middle" transform="translate(1745.6 1244.7) scale(0.72 1) translate(-1745.6 -1244.7)">13</text>
<text x="1773.7" y="1244.7" font-size="13" fill="#444" stroke="none" font-family="Liberation Sans" text-anchor="middle" transform="translate(1773.7 1244.7) scale(0.72 1) translate(-1773.7 -1244.7)">2</text>
<text x="1791.2" y="1244.7" font-size="13" fill="#444" stroke="none" font-family="Liberation Sans" text-anchor="start" transform="translate(1791.2 1244.7) scale(0.72 1) translate(-1791.2 -1244.7)">Stck.</text>
<text x="1821.4" y="1244.7" font-size="13" fill="#444" stroke="none" font-family="Liberation Sans" text-anchor="start" transform="translate(1821.4 1244.7) scale(0.72 1) translate(-1821.4 -1244.7)">Verschlussschraube</text>
<text x="2016.7" y="1244.7" font-size="13" fill="#444" stroke="none" font-family="Liberation Sans" text-anchor="start" transform="translate(2016.7 1244.7) scale(0.72 1) translate(-2016.7 -1244.7)">DIN 908 — M14 x 1,5 — St</text>
<text x="1745.6" y="1266.7" font-size="13" fill="#444" stroke="none" font-family="Liberation Sans" text-anchor="middle" transform="translate(1745.6 1266.7) scale(0.72 1) translate(-1745.6 -1266.7)">14</text>
<text x="1773.7" y="1266.7" font-size="13" fill="#444" stroke="none" font-family="Liberation Sans" text-anchor="middle" transform="translate(1773.7 1266.7) scale(0.72 1) translate(-1773.7 -1266.7)">2</text>
<text x="1791.2" y="1266.7" font-size="13" fill="#444" stroke="none" font-family="Liberation Sans" text-anchor="start" transform="translate(1791.2 1266.7) scale(0.72 1) translate(-1791.2 -1266.7)">Stck.</text>
<text x="1821.4" y="1266.7" font-size="13" fill="#444" stroke="none" font-family="Liberation Sans" text-anchor="start" transform="translate(1821.4 1266.7) scale(0.72 1) translate(-1821.4 -1266.7)">Dichtring</text>
<text x="2016.7" y="1266.7" font-size="13" fill="#444" stroke="none" font-family="Liberation Sans" text-anchor="start" transform="translate(2016.7 1266.7) scale(0.72 1) translate(-2016.7 -1266.7)">DIN 7603 — A 14 x 18 Vf</text>
<text x="1745.6" y="1288.7" font-size="13" fill="#444" stroke="none" font-family="Liberation Sans" text-anchor="middle" transform="translate(1745.6 1288.7) scale(0.72 1) translate(-1745.6 -1288.7)">15</text>
<text x="1773.7" y="1288.7" font-size="13" fill="#444" stroke="none" font-family="Liberation Sans" text-anchor="middle" transform="translate(1773.7 1288.7) scale(0.72 1) translate(-1773.7 -1288.7)">15</text>
<text x="1791.2" y="1288.7" font-size="13" fill="#444" stroke="none" font-family="Liberation Sans" text-anchor="start" transform="translate(1791.2 1288.7) scale(0.72 1) translate(-1791.2 -1288.7)">Stck.</text>
<text x="1821.4" y="1288.7" font-size="13" fill="#444" stroke="none" font-family="Liberation Sans" text-anchor="start" transform="translate(1821.4 1288.7) scale(0.72 1) translate(-1821.4 -1288.7)">Zylinderschraube mit Innensechskant</text>
<text x="2016.7" y="1288.7" font-size="13" fill="#444" stroke="none" font-family="Liberation Sans" text-anchor="start" transform="translate(2016.7 1288.7) scale(0.72 1) translate(-2016.7 -1288.7)">ISO 4762 — M6 x 20 — 8.8</text>
<text x="1745.6" y="1310.8" font-size="13" fill="#444" stroke="none" font-family="Liberation Sans" text-anchor="middle" transform="translate(1745.6 1310.8) scale(0.72 1) translate(-1745.6 -1310.8)">16</text>
<text x="1773.7" y="1310.8" font-size="13" fill="#444" stroke="none" font-family="Liberation Sans" text-anchor="middle" transform="translate(1773.7 1310.8) scale(0.72 1) translate(-1773.7 -1310.8)">1</text>
<text x="1791.2" y="1310.8" font-size="13" fill="#444" stroke="none" font-family="Liberation Sans" text-anchor="start" transform="translate(1791.2 1310.8) scale(0.72 1) translate(-1791.2 -1310.8)">Stck.</text>
<text x="1821.4" y="1310.8" font-size="13" fill="#444" stroke="none" font-family="Liberation Sans" text-anchor="start" transform="translate(1821.4 1310.8) scale(0.72 1) translate(-1821.4 -1310.8)">Zylinderschraube mit Innensechskant</text>
<text x="2016.7" y="1310.8" font-size="13" fill="#444" stroke="none" font-family="Liberation Sans" text-anchor="start" transform="translate(2016.7 1310.8) scale(0.72 1) translate(-2016.7 -1310.8)">ISO 4762 — M6 x 16 — 8.8</text>
<text x="1745.6" y="1332.8" font-size="13" fill="#444" stroke="none" font-family="Liberation Sans" text-anchor="middle" transform="translate(1745.6 1332.8) scale(0.72 1) translate(-1745.6 -1332.8)">17</text>
<text x="1773.7" y="1332.8" font-size="13" fill="#444" stroke="none" font-family="Liberation Sans" text-anchor="middle" transform="translate(1773.7 1332.8) scale(0.72 1) translate(-1773.7 -1332.8)">1</text>
<text x="1791.2" y="1332.8" font-size="13" fill="#444" stroke="none" font-family="Liberation Sans" text-anchor="start" transform="translate(1791.2 1332.8) scale(0.72 1) translate(-1791.2 -1332.8)">Stck.</text>
<text x="1821.4" y="1332.8" font-size="13" fill="#444" stroke="none" font-family="Liberation Sans" text-anchor="start" transform="translate(1821.4 1332.8) scale(0.72 1) translate(-1821.4 -1332.8)">Scheibe</text>
<text x="2016.7" y="1332.8" font-size="13" fill="#444" stroke="none" font-family="Liberation Sans" text-anchor="start" transform="translate(2016.7 1332.8) scale(0.72 1) translate(-2016.7 -1332.8)">DIN 9021 — B 6,4</text>
<text x="1745.6" y="1354.8" font-size="13" fill="#444" stroke="none" font-family="Liberation Sans" text-anchor="middle" transform="translate(1745.6 1354.8) scale(0.72 1) translate(-1745.6 -1354.8)">18</text>
<text x="1773.7" y="1354.8" font-size="13" fill="#444" stroke="none" font-family="Liberation Sans" text-anchor="middle" transform="translate(1773.7 1354.8) scale(0.72 1) translate(-1773.7 -1354.8)">2</text>
<text x="1791.2" y="1354.8" font-size="13" fill="#444" stroke="none" font-family="Liberation Sans" text-anchor="start" transform="translate(1791.2 1354.8) scale(0.72 1) translate(-1791.2 -1354.8)">Stck.</text>
<text x="1821.4" y="1354.8" font-size="13" fill="#444" stroke="none" font-family="Liberation Sans" text-anchor="start" transform="translate(1821.4 1354.8) scale(0.72 1) translate(-1821.4 -1354.8)">Radial-Wellendichtring</text>
<text x="2016.7" y="1354.8" font-size="13" fill="#444" stroke="none" font-family="Liberation Sans" text-anchor="start" transform="translate(2016.7 1354.8) scale(0.72 1) translate(-2016.7 -1354.8)">DIN 3760 — AS 45 x 60 x 8</text>
<text x="1745.6" y="1376.8" font-size="13" fill="#444" stroke="none" font-family="Liberation Sans" text-anchor="middle" transform="translate(1745.6 1376.8) scale(0.72 1) translate(-1745.6 -1376.8)">19</text>
<text x="1773.7" y="1376.8" font-size="13" fill="#444" stroke="none" font-family="Liberation Sans" text-anchor="middle" transform="translate(1773.7 1376.8) scale(0.72 1) translate(-1773.7 -1376.8)">2</text>
<text x="1791.2" y="1376.8" font-size="13" fill="#444" stroke="none" font-family="Liberation Sans" text-anchor="start" transform="translate(1791.2 1376.8) scale(0.72 1) translate(-1791.2 -1376.8)">Stck.</text>
<text x="1821.4" y="1376.8" font-size="13" fill="#444" stroke="none" font-family="Liberation Sans" text-anchor="start" transform="translate(1821.4 1376.8) scale(0.72 1) translate(-1821.4 -1376.8)">O-Ring</text>
<text x="2016.7" y="1376.8" font-size="13" fill="#444" stroke="none" font-family="Liberation Sans" text-anchor="start" transform="translate(2016.7 1376.8) scale(0.72 1) translate(-2016.7 -1376.8)">DIN 3771-85x3,55-N-NBR 70</text>
<text x="1745.6" y="1398.9" font-size="13" fill="#444" stroke="none" font-family="Liberation Sans" text-anchor="middle" transform="translate(1745.6 1398.9) scale(0.72 1) translate(-1745.6 -1398.9)">20</text>
<text x="1773.7" y="1398.9" font-size="13" fill="#444" stroke="none" font-family="Liberation Sans" text-anchor="middle" transform="translate(1773.7 1398.9) scale(0.72 1) translate(-1773.7 -1398.9)">1</text>
<text x="1791.2" y="1398.9" font-size="13" fill="#444" stroke="none" font-family="Liberation Sans" text-anchor="start" transform="translate(1791.2 1398.9) scale(0.72 1) translate(-1791.2 -1398.9)">Stck.</text>
<text x="1821.4" y="1398.9" font-size="13" fill="#444" stroke="none" font-family="Liberation Sans" text-anchor="start" transform="translate(1821.4 1398.9) scale(0.72 1) translate(-1821.4 -1398.9)">O-Ring</text>
<text x="2016.7" y="1398.9" font-size="13" fill="#444" stroke="none" font-family="Liberation Sans" text-anchor="start" transform="translate(2016.7 1398.9) scale(0.72 1) translate(-2016.7 -1398.9)">DIN 3771-40x3,55-N-NBR 70</text>
<text x="1745.6" y="1420.9" font-size="13" fill="#444" stroke="none" font-family="Liberation Sans" text-anchor="middle" transform="translate(1745.6 1420.9) scale(0.72 1) translate(-1745.6 -1420.9)">21</text>
<text x="1773.7" y="1420.9" font-size="13" fill="#444" stroke="none" font-family="Liberation Sans" text-anchor="middle" transform="translate(1773.7 1420.9) scale(0.72 1) translate(-1773.7 -1420.9)">4</text>
<text x="1791.2" y="1420.9" font-size="13" fill="#444" stroke="none" font-family="Liberation Sans" text-anchor="start" transform="translate(1791.2 1420.9) scale(0.72 1) translate(-1791.2 -1420.9)">Stck.</text>
<text x="1821.4" y="1420.9" font-size="13" fill="#444" stroke="none" font-family="Liberation Sans" text-anchor="start" transform="translate(1821.4 1420.9) scale(0.72 1) translate(-1821.4 -1420.9)">Stiftschraube</text>
<text x="2016.7" y="1420.9" font-size="13" fill="#444" stroke="none" font-family="Liberation Sans" text-anchor="start" transform="translate(2016.7 1420.9) scale(0.72 1) translate(-2016.7 -1420.9)">Kaufteil gemäß Zeichnung</text>
<text x="2166.2" y="1420.9" font-size="13" fill="#444" stroke="none" font-family="Liberation Sans" text-anchor="start" transform="translate(2166.2 1420.9) scale(0.72 1) translate(-2166.2 -1420.9)">S235JR</text>
<rect x="1762.5" y="1433.5" width="491.5" height="99" fill="none" stroke="#1a1a1a" stroke-width="2.6"/>
<path d="M1783.0 1433.5 L1783.0 1532.5" stroke="#444" stroke-width="1.4"  />
<path d="M1851.0 1433.5 L1851.0 1532.5" stroke="#444" stroke-width="1.4"  />
<path d="M1885.0 1433.5 L1885.0 1532.5" stroke="#444" stroke-width="1.4"  />
<path d="M1906.0 1433.5 L1906.0 1532.5" stroke="#444" stroke-width="1.4"  />
<path d="M2021.0 1433.5 L2021.0 1532.5" stroke="#444" stroke-width="1.4"  />
<path d="M1762.5 1444.5 L1906.0 1444.5" stroke="#555" stroke-width="1.2"  />
<path d="M1762.5 1455.5 L1906.0 1455.5" stroke="#555" stroke-width="1.2"  />
<path d="M1762.5 1466.5 L1906.0 1466.5" stroke="#555" stroke-width="1.2"  />
<path d="M1762.5 1477.5 L1906.0 1477.5" stroke="#555" stroke-width="1.2"  />
<path d="M1762.5 1488.5 L1906.0 1488.5" stroke="#555" stroke-width="1.2"  />
<path d="M1762.5 1499.5 L1906.0 1499.5" stroke="#555" stroke-width="1.2"  />
<path d="M1762.5 1510.5 L1906.0 1510.5" stroke="#555" stroke-width="1.2"  />
<path d="M1762.5 1521.5 L1906.0 1521.5" stroke="#555" stroke-width="1.2"  />
<path d="M1906.0 1445.0 L2021.0 1445.0" stroke="#555" stroke-width="1.2"  />
<path d="M1906.0 1456.0 L2021.0 1456.0" stroke="#555" stroke-width="1.2"  />
<path d="M1906.0 1467.0 L2021.0 1467.0" stroke="#555" stroke-width="1.2"  />
<path d="M1906.0 1478.0 L2021.0 1478.0" stroke="#555" stroke-width="1.2"  />
<path d="M1906.0 1490.0 L2021.0 1490.0" stroke="#555" stroke-width="1.2"  />
<path d="M1933.0 1433.5 L1933.0 1478.0" stroke="#555" stroke-width="1.2"  />
<path d="M1975.0 1433.5 L1975.0 1490.0" stroke="#555" stroke-width="1.2"  />
<path d="M2021.0 1490.0 L2254.0 1490.0" stroke="#555" stroke-width="1.2"  />
<path d="M1906.0 1522.0 L2254.0 1522.0" stroke="#555" stroke-width="1.2"  />
<path d="M2137.0 1522.0 L2137.0 1532.5" stroke="#555" stroke-width="1.2"  />
<path d="M2220.0 1490.0 L2220.0 1522.0" stroke="#555" stroke-width="1.2"  />
<path d="M2220.0 1512.0 L2254.0 1512.0" stroke="#555" stroke-width="1.2"  />
<text x="2137.0" y="1465.0" font-size="17" fill="#333" stroke="none" font-family="Liberation Sans" text-anchor="middle" transform="translate(2137.0 1465.0) scale(0.78 1) translate(-2137.0 -1465.0)">Schneckengetriebe</text>
<text x="2238.0" y="1510.0" font-size="11" fill="#444" stroke="none" font-family="Liberation Sans" text-anchor="middle" transform="translate(2238.0 1510.0) scale(0.72 1) translate(-2238.0 -1510.0)">1</text>
<text x="1955.0" y="1442.0" font-size="8" fill="#777" stroke="none" font-family="Liberation Sans" text-anchor="middle" transform="translate(1955.0 1442.0) scale(0.7 1) translate(-1955.0 -1442.0)">Datum</text>
<text x="1995.0" y="1442.0" font-size="8" fill="#777" stroke="none" font-family="Liberation Sans" text-anchor="middle" transform="translate(1995.0 1442.0) scale(0.7 1) translate(-1995.0 -1442.0)">Name</text>
<text x="1917.0" y="1453.0" font-size="8" fill="#777" stroke="none" font-family="Liberation Sans" text-anchor="middle" transform="translate(1917.0 1453.0) scale(0.7 1) translate(-1917.0 -1453.0)">Bearb.</text>
<text x="1952.0" y="1453.0" font-size="8" fill="#777" stroke="none" font-family="Liberation Sans" text-anchor="middle" transform="translate(1952.0 1453.0) scale(0.7 1) translate(-1952.0 -1453.0)">20.03.2006</text>
<text x="1917.0" y="1464.0" font-size="8" fill="#777" stroke="none" font-family="Liberation Sans" text-anchor="middle" transform="translate(1917.0 1464.0) scale(0.7 1) translate(-1917.0 -1464.0)">Gepr.</text>
<text x="1917.0" y="1475.0" font-size="8" fill="#777" stroke="none" font-family="Liberation Sans" text-anchor="middle" transform="translate(1917.0 1475.0) scale(0.7 1) translate(-1917.0 -1475.0)">Norm</text>
<text x="1773.0" y="1530.0" font-size="8" fill="#777" stroke="none" font-family="Liberation Sans" text-anchor="middle" transform="translate(1773.0 1530.0) scale(0.7 1) translate(-1773.0 -1530.0)">Zust.</text>
<text x="1817.0" y="1530.0" font-size="8" fill="#777" stroke="none" font-family="Liberation Sans" text-anchor="middle" transform="translate(1817.0 1530.0) scale(0.7 1) translate(-1817.0 -1530.0)">Änderung</text>
<text x="1868.0" y="1530.0" font-size="8" fill="#777" stroke="none" font-family="Liberation Sans" text-anchor="middle" transform="translate(1868.0 1530.0) scale(0.7 1) translate(-1868.0 -1530.0)">Datum</text>
<text x="1896.0" y="1530.0" font-size="8" fill="#777" stroke="none" font-family="Liberation Sans" text-anchor="middle" transform="translate(1896.0 1530.0) scale(0.7 1) translate(-1896.0 -1530.0)">Name</text>
</g></svg>
<div class="a" style="left:2320px;top:199px;width:2px;height:1380px;background:#444"></div>
<div class="a" style="left:2322px;top:199px;width:558px;height:1380px;background:#252526"></div>
<div class="a" style="left:2864px;top:199px;width:16px;height:1380px;background:#2c2c2c"></div>
<div class="a" style="left:2864px;top:199px;width:16px;height:121px;background:#575757;border-radius:8px"></div>
<div class="t" style="left:2354.5px;top:238.1px;font-size:27px;line-height:27px;color:#d4d4d4;font-weight:700;font-style:normal;letter-spacing:-0.2px;">OBJECT PROPERTIES</div>
<div class="a" style="left:2354px;top:292px;width:478px;height:239px;background:#3b3b3b;border:2px solid #555;border-radius:11px"></div>
<div class="t" style="left:2358.0px;width:470px;text-align:center;top:367.6px;font-size:30px;line-height:30px;color:#9a9a9a;font-weight:400;font-style:italic;letter-spacing:0px">Please select an object</div>
<div class="t" style="left:2354.5px;top:587.0px;font-size:27px;line-height:27px;color:#d4d4d4;font-weight:700;font-style:normal;letter-spacing:-0.2px;">GEOMETRY PARAMETERS</div>
<div class="a" style="left:2354px;top:641px;width:478px;height:239px;background:#3b3b3b;border:2px solid #555;border-radius:11px"></div>
<div class="t" style="left:2358.0px;width:470px;text-align:center;top:716.5px;font-size:30px;line-height:30px;color:#9a9a9a;font-weight:400;font-style:italic;letter-spacing:0px">Please select a</div>
<div class="t" style="left:2358.0px;width:470px;text-align:center;top:758.8px;font-size:30px;line-height:30px;color:#9a9a9a;font-weight:400;font-style:italic;letter-spacing:0px">parametric object</div>
<div class="t" style="left:2354.5px;top:935.9px;font-size:27px;line-height:27px;color:#d4d4d4;font-weight:700;font-style:normal;letter-spacing:-0.2px;">MATERIAL LIBRARY</div>
<div class="t" style="left:2355.0px;top:996.3px;font-size:23px;line-height:23px;color:#fff;font-weight:700;font-style:normal;letter-spacing:0.2px;">METAL</div>
<div class="a" style="left:2354.5px;top:1033px;width:111px;height:78px;background:#333;border:2px solid #575757;border-radius:11px"></div>
<svg class="a" style="left:2393.0px;top:1055.5px" width="34" height="34" viewBox="0 0 40 40"><g transform="translate(20 20) scale(1.28) rotate(-45) translate(-20 -20)"><rect x="13" y="2" width="14" height="9" rx="1.5" fill="#c9bfd6"/><rect x="16" y="10" width="8" height="26" fill="#bdb2cc"/><rect x="12" y="20" width="16" height="9" rx="1.5" fill="#c9bfd6"/><g stroke="#9f93b3" stroke-width="1"><path d="M16 14 h8"/><path d="M16 17 h8"/><path d="M16 32 h8"/></g></g></svg>
<div class="a" style="left:2476.5px;top:1033px;width:111px;height:78px;background:#333;border:2px solid #575757;border-radius:11px"></div>
<svg class="a" style="left:2515.0px;top:1055.5px" width="34" height="34" viewBox="0 0 40 40"><path d="M3 1 L15 1 L23 11 L14 16 Z" fill="#1d7fc9"/><path d="M37 1 L25 1 L17 11 L26 16 Z" fill="#2aa2ea"/><circle cx="20" cy="26" r="13" fill="#f7c14a"/><circle cx="20" cy="26" r="10" fill="#f9b12b"/><text x="20" y="31.5" text-anchor="middle" font-family="Liberation Sans" font-weight="700" font-size="14" fill="#6b3b00">1</text></svg>
<div class="a" style="left:2598.5px;top:1033px;width:111px;height:78px;background:#333;border:2px solid #575757;border-radius:11px"></div>
<svg class="a" style="left:2637.0px;top:1055.5px" width="34" height="34" viewBox="0 0 40 40"><path d="M3 1 L15 1 L23 11 L14 16 Z" fill="#1d7fc9"/><path d="M37 1 L25 1 L17 11 L26 16 Z" fill="#2aa2ea"/><circle cx="20" cy="26" r="13" fill="#dedede"/><circle cx="20" cy="26" r="10" fill="#cfcfcf"/><text x="20" y="31.5" text-anchor="middle" font-family="Liberation Sans" font-weight="700" font-size="14" fill="#555">2</text></svg>
<div class="a" style="left:2720.5px;top:1033px;width:111px;height:78px;background:#333;border:2px solid #575757;border-radius:11px"></div>
<svg class="a" style="left:2759.0px;top:1055.5px" width="34" height="34" viewBox="0 0 40 40"><path d="M3 1 L15 1 L23 11 L14 16 Z" fill="#1d7fc9"/><path d="M37 1 L25 1 L17 11 L26 16 Z" fill="#2aa2ea"/><circle cx="20" cy="26" r="13" fill="#eba15a"/><circle cx="20" cy="26" r="10" fill="#e08f3e"/><text x="20" y="31.5" text-anchor="middle" font-family="Liberation Sans" font-weight="700" font-size="14" fill="#4a2500">3</text></svg>
<div class="t" style="left:2355.0px;top:1147.3px;font-size:23px;line-height:23px;color:#fff;font-weight:700;font-style:normal;letter-spacing:0.2px;">WOOD</div>
<div class="a" style="left:2354.5px;top:1184px;width:111px;height:78px;background:#333;border:2px solid #575757;border-radius:11px"></div>
<svg class="a" style="left:2393.0px;top:1206.5px" width="34" height="34" viewBox="0 0 40 40"><path d="M9 8 L9 34 Q9 37 12 37 L27 37 Q30 37 30 34 L30 8 Z" fill="#9b5a3c"/><ellipse cx="19.5" cy="8" rx="10.5" ry="4" fill="#e8b46a"/><ellipse cx="19.5" cy="8" rx="5" ry="1.8" fill="none" stroke="#b7773e" stroke-width="1"/><path d="M9 24 L3 28 L5 31 L9 29Z" fill="#9b5a3c"/><path d="M30 16 L35 12 L36 15 L30 20Z" fill="#9b5a3c"/><path d="M17 17 v12 M23 14 v16" stroke="#7d4128" stroke-width="1"/></svg>
<div class="a" style="left:2476.5px;top:1184px;width:111px;height:78px;background:#333;border:2px solid #575757;border-radius:11px"></div>
<svg class="a" style="left:2515.0px;top:1206.5px" width="34" height="34" viewBox="0 0 40 40"><path d="M20 3 L27 14 L24 14 L30 23 L26 23 L32 33 L8 33 L14 23 L10 23 L16 14 L13 14 Z" fill="#3e9b2f"/><rect x="17" y="33" width="6" height="5" fill="#8a4f2c"/></svg>
<div class="a" style="left:2598.5px;top:1184px;width:111px;height:78px;background:#333;border:2px solid #575757;border-radius:11px"></div>
<svg class="a" style="left:2637.0px;top:1206.5px" width="34" height="34" viewBox="0 0 40 40"><path d="M3 5 L6 2 L30 26 L24 32 Z" fill="#c8c2cc"/><path d="M3 5 L24 32" stroke="#8a8490" stroke-width="1.2" stroke-dasharray="2 2"/><path d="M26 22 L37 33 L30 40 L19 29 Z" fill="#a15637"/><rect x="26" y="29" width="5" height="3" transform="rotate(45 28.5 30.5)" fill="#2b2b2b"/></svg>
<div class="t" style="left:2355.0px;top:1298.4px;font-size:23px;line-height:23px;color:#fff;font-weight:700;font-style:normal;letter-spacing:0.2px;">STONE</div>
<div class="a" style="left:2354.5px;top:1335px;width:111px;height:78px;background:#333;border:2px solid #575757;border-radius:11px"></div>
<svg class="a" style="left:2393.0px;top:1357.5px" width="34" height="34" viewBox="0 0 40 40"><path d="M20 3 L37 13 L3 13 Z" fill="#a8a8a8"/><rect x="5" y="14" width="30" height="3" fill="#9a9a9a"/><g fill="#b5b5b5"><rect x="8" y="18" width="4" height="15"/><rect x="15" y="18" width="4" height="15"/><rect x="22" y="18" width="4" height="15"/><rect x="29" y="18" width="4" height="15"/></g><rect x="5" y="33" width="30" height="3" fill="#9a9a9a"/><rect x="2" y="36" width="36" height="3" fill="#a8a8a8"/></svg>
<div class="a" style="left:2476.5px;top:1335px;width:111px;height:78px;background:#333;border:2px solid #575757;border-radius:11px"></div>
<svg class="a" style="left:2515.0px;top:1357.5px" width="34" height="34" viewBox="0 0 40 40"><path d="M31 2 L35 5 L37 12 L37 34 L33 39 L28 39 Z" fill="#9c9c9c"/><path d="M13 4 Q13 1 17 1 L30 1 Q33 1 33 4 L33 36 Q33 39 30 39 L15 39 Q12 39 12 36 L12 31 Q6 31 4 27 L10 21 L12 16 Z" fill="#d6d6d6"/><rect x="13" y="9" width="18" height="5" fill="#6e6e6e"/><path d="M12 16 L10 21 L4 27 Q6 31 12 31 L16 31 L16 24 Z" fill="#bdbdbd"/><path d="M16 34 h11" stroke="#8a8a8a" stroke-width="1.5"/></svg>
<div class="a" style="left:2598.5px;top:1335px;width:111px;height:78px;background:#333;border:2px solid #575757;border-radius:11px"></div>
<svg class="a" style="left:2637.0px;top:1357.5px" width="34" height="34" viewBox="0 0 40 40"><rect x="1" y="1" width="38" height="38" rx="4" fill="#f5702a"/><g stroke="#f3d6c4" stroke-width="2"><path d="M1 10.5 h38 M1 20 h38 M1 29.5 h38"/><path d="M10 1 v9.5 M30 1 v9.5 M20 10.5 v9.5 M8 20 v9.5 M30 20 v9.5 M20 29.5 v9.5"/></g></svg>
<div class="t" style="left:2355.0px;top:1449.1px;font-size:23px;line-height:23px;color:#fff;font-weight:700;font-style:normal;letter-spacing:0.2px;">GLASS</div>
<div class="a" style="left:2354.5px;top:1486px;width:111px;height:78px;background:#333;border:2px solid #575757;border-radius:11px"></div>
<svg class="a" style="left:2393.0px;top:1508.5px" width="34" height="34" viewBox="0 0 40 40"><rect x="1" y="1" width="38" height="38" rx="4" fill="#d0d0d0"/><rect x="5" y="5" width="14" height="14" fill="#0e96e8"/><rect x="21" y="5" width="14" height="14" fill="#8fd3ff"/><rect x="5" y="21" width="14" height="14" fill="#8fd3ff"/><rect x="21" y="21" width="14" height="14" fill="#9fdcff"/><path d="M21 19 L35 5 L35 19Z" fill="#2aa8f2"/><path d="M5 35 L19 21 L19 35Z" fill="#2aa8f2"/></svg>
<div class="a" style="left:2476.5px;top:1486px;width:111px;height:78px;background:#333;border:2px solid #575757;border-radius:11px"></div>
<svg class="a" style="left:2515.0px;top:1508.5px" width="34" height="34" viewBox="0 0 40 40"><rect x="1" y="1" width="38" height="38" rx="4" fill="#d0d0d0"/><rect x="5" y="5" width="14" height="14" fill="#0e96e8"/><rect x="21" y="5" width="14" height="14" fill="#8fd3ff"/><rect x="5" y="21" width="14" height="14" fill="#8fd3ff"/><rect x="21" y="21" width="14" height="14" fill="#9fdcff"/><path d="M21 19 L35 5 L35 19Z" fill="#2aa8f2"/><path d="M5 35 L19 21 L19 35Z" fill="#2aa8f2"/></svg>
<div class="a" style="left:0px;top:1579px;width:2880px;height:2px;background:#444"></div>
<div class="a" style="left:0px;top:1581px;width:2880px;height:47px;background:#2b2b2b"></div>
<div class="t" style="left:33.0px;top:1595.8px;font-size:23px;line-height:23px;color:#9a9a9a;font-weight:400;font-style:normal;letter-spacing:0px;">Mouse Position: (0, 0, 0)</div>
<div class="t" style="left:2248.0px;width:600px;text-align:right;top:1596.2px;font-size:22px;line-height:22px;color:#9a9a9a;font-weight:400;font-style:normal;letter-spacing:-0.3px">FPS: 58</div>
<div class="a" style="left:0px;top:1628px;width:2880px;height:96px;background:linear-gradient(90deg,#e3ebf6 0%,#dde6f5 30%,#d6dff4 50%,#dde6f5 70%,#e3ebf6 100%)"></div>
<div class="a" style="left:0px;top:1628px;width:2880px;height:2px;background:#c9cdd6"></div>
<svg class="a" style="left:37px;top:1655px" width="50" height="44" viewBox="0 0 50 44"><defs><linearGradient id="cl" x1="0" y1="0" x2="0" y2="1"><stop offset="0" stop-color="#a6b9e3"/><stop offset="1" stop-color="#eef2fa"/></linearGradient><linearGradient id="dr" x1="0" y1="0" x2="0" y2="1"><stop offset="0" stop-color="#48a9ff"/><stop offset="1" stop-color="#1f6ff0"/></linearGradient></defs><g fill="#a3b6de"><circle cx="24" cy="14" r="12.8"/><circle cx="37" cy="21" r="11.8"/><circle cx="11" cy="22" r="10.8"/></g><circle cx="24" cy="14" r="12" fill="url(#cl)"/><circle cx="37" cy="21" r="11" fill="url(#cl)"/><circle cx="11" cy="22" r="10" fill="url(#cl)"/><rect x="11" y="18" width="27" height="13" fill="url(#cl)"/><path d="M13 21 L22 31 Q24 42 17 42 Q11 42 13 33Z" fill="url(#dr)"/><path d="M29 19 L40 32 Q43 42 35 42 Q28 42 29 33Z" fill="url(#dr)"/></svg>
<div class="t" style="left:101.0px;top:1649.0px;font-size:22.5px;line-height:22.5px;color:#1b1b1b;font-weight:400;font-style:normal;letter-spacing:0px;">24°C</div>
<svg class="a" style="left:101px;top:1681px" width="23" height="22" viewBox="0 0 23 22"><g stroke="#555" stroke-width="1.6" fill="none"><path d="M1 1.5 H22"/><path d="M11.5 1.5 V21"/><path d="M2 6 V21 M2 6 H21 V20 Q21 21 19 21"/><path d="M5 10 l3 2 M5 15 l3 2 M15 10 l3 2 M15 15 l3 2"/></g></svg>
<svg class="a" style="left:976px;top:1654px" width="46" height="46" viewBox="0 0 46 46"><defs><linearGradient id="wg" x1="0" y1="0" x2="1" y2="1"><stop offset="0" stop-color="#2fc0fb"/><stop offset="1" stop-color="#0a66d4"/></linearGradient></defs><g fill="url(#wg)"><rect x="0" y="0" width="21.8" height="21.8" rx="2"/><rect x="24.2" y="0" width="21.8" height="21.8" rx="2"/><rect x="0" y="24.2" width="21.8" height="21.8" rx="2"/><rect x="24.2" y="24.2" width="21.8" height="21.8" rx="2"/></g></svg>
<svg class="a" style="left:1068px;top:1654px" width="44" height="46" viewBox="0 0 44 46"><circle cx="18.5" cy="18.5" r="16" fill="none" stroke="#1f1f1f" stroke-width="4.8"/><path d="M30 30.5 L41 42" stroke="#1f1f1f" stroke-width="5" stroke-linecap="round"/></svg>
<svg class="a" style="left:1153px;top:1654px" width="48" height="45" viewBox="0 0 48 45"><defs><linearGradient id="tv" x1="0" y1="0" x2="0" y2="1"><stop offset="0" stop-color="#444"/><stop offset="1" stop-color="#111"/></linearGradient></defs><rect x="0" y="13" width="36" height="32" rx="2" fill="url(#tv)"/><rect x="12" y="0" width="36" height="32" rx="2" fill="#f2f2f2" opacity="0.85"/></svg>
<svg class="a" style="left:1241px;top:1653px" width="46" height="47" viewBox="0 0 46 47"><defs><linearGradient id="ch" x1="0" y1="0" x2="1" y2="1"><stop offset="0" stop-color="#7b5fd8"/><stop offset="1" stop-color="#4f6ee8"/></linearGradient></defs><circle cx="23" cy="22" r="22" fill="url(#ch)"/><path d="M2 46 L6 30 L18 40Z" fill="#5a63de"/><rect x="10" y="13" width="19" height="18" rx="3" fill="#fff"/><path d="M30 19 L36 14 L36 30 L30 25Z" fill="#fff"/></svg>
<svg class="a" style="left:1329px;top:1655px" width="48" height="43" viewBox="0 0 48 43"><path d="M0 2 Q0 0 2 0 L16 0 L20 4 L48 4 L48 10 L0 10Z" fill="#e0a800"/><path d="M0 6 L48 6 L48 41 Q48 43 46 43 L2 43 Q0 43 0 41Z" fill="#ffc83d"/><path d="M8 43 L8 30 Q8 27 11 27 L37 27 Q40 27 40 30 L40 43Z" fill="#1a7bd6"/><rect x="14" y="32" width="20" height="2" fill="#0b4f9a"/></svg>
<svg class="a" style="left:1417px;top:1653px" width="48" height="47" viewBox="0 0 48 47"><path d="M0 16 L12 10 L12 37 L0 31 L6 23.5Z" fill="#6a43b5"/><path d="M2 15 L12 10 L40 37 L36 47 Z" fill="#8a62d6"/><path d="M2 32 L12 37 L40 10 L36 0 Z" fill="#a67ce6"/><path d="M36 0 L48 6 L48 41 L36 47Z" fill="#c9a3ff"/></svg>
<svg class="a" style="left:1506px;top:1651px" width="47" height="49" viewBox="0 0 47 49"><path d="M10 12 L10 5 Q10 1 14 1 L33 1 Q37 1 37 5 L37 12" fill="none" stroke="#38c4f5" stroke-width="3.5"/><path d="M0 10 L47 10 L47 40 Q47 49 38 49 L9 49 Q0 49 0 40Z" fill="#1d5cb0"/><rect x="13" y="17" width="9.5" height="9.5" fill="#f25022"/><rect x="24.5" y="17" width="9.5" height="9.5" fill="#7fba00"/><rect x="13" y="28.5" width="9.5" height="9.5" fill="#00a4ef"/><rect x="24.5" y="28.5" width="9.5" height="9.5" fill="#ffb900"/></svg>
<svg class="a" style="left:1593px;top:1658px" width="48" height="36" viewBox="0 0 48 36"><rect x="0" y="0" width="48" height="36" rx="2" fill="#0c0c0c"/><path d="M0 7 H48" stroke="#fff" stroke-width="1.5"/><path d="M15 0 V7 M31 0 V7" stroke="#fff" stroke-width="1.5"/><path d="M7 13 L17 20 L7 27" fill="none" stroke="#fff" stroke-width="3.5"/><rect x="22" y="27" width="19" height="4.5" rx="2" fill="#fff"/></svg>
<svg class="a" style="left:1681px;top:1658px" width="48" height="36" viewBox="0 0 48 36"><defs><linearGradient id="pf" x1="0" y1="0" x2="0" y2="1"><stop offset="0" stop-color="#5ab8f0"/><stop offset="1" stop-color="#c8e8ff"/></linearGradient></defs><rect x="1" y="1" width="46" height="34" rx="1.5" fill="#f0f4f8" stroke="#9aa3ad" stroke-width="2"/><path d="M3 25 L8 23 L12 8 L17 18 L22 20 L25 27 L29 25 L32 10 L35 24 L45 25 L45 33 L3 33Z" fill="url(#pf)" stroke="#2a7fc8" stroke-width="1"/></svg>
<svg class="a" style="left:1769px;top:1653px" width="48" height="46" viewBox="0 0 48 46"><g fill="#7b8289"><circle cx="24" cy="23" r="17"/><rect x="19" y="0" width="10" height="12" rx="2" transform="rotate(0 24 23)"/><rect x="19" y="0" width="10" height="12" rx="2" transform="rotate(60 24 23)"/><rect x="19" y="0" width="10" height="12" rx="2" transform="rotate(120 24 23)"/><rect x="19" y="0" width="10" height="12" rx="2" transform="rotate(180 24 23)"/><rect x="19" y="0" width="10" height="12" rx="2" transform="rotate(240 24 23)"/><rect x="19" y="0" width="10" height="12" rx="2" transform="rotate(300 24 23)"/></g><circle cx="24" cy="23" r="11" fill="#e8ecf2"/><circle cx="24" cy="23" r="8" fill="#1464c0"/></svg>
<div class="a" style="left:1843px;top:1638px;width:76px;height:76px;background:#eef1f9;border-radius:7px;box-shadow:0 0 0 1px #dfe3ea"></div>
<svg class="a" style="left:1857px;top:1652px" width="48" height="48" viewBox="0 0 40 40"><circle cx="20" cy="20" r="20" fill="#2b2e3b"/><g fill="none" stroke="#a9c4cf" stroke-width="1.4"><ellipse cx="20" cy="20" rx="14" ry="5.5" transform="rotate(30 20 20)"/><ellipse cx="20" cy="20" rx="14" ry="5.5" transform="rotate(-30 20 20)"/><ellipse cx="20" cy="20" rx="14" ry="5.5" transform="rotate(90 20 20)"/></g><circle cx="20" cy="20" r="1.6" fill="#a9c4cf"/></svg>
<div class="a" style="left:1865px;top:1708px;width:32px;height:6px;background:#1a73d8;border-radius:3px"></div>
<div class="a" style="left:1347px;top:1708px;width:12px;height:6px;background:#7c8089;border-radius:3px"></div>
<div class="a" style="left:1435px;top:1708px;width:12px;height:6px;background:#7c8089;border-radius:3px"></div>
<div class="a" style="left:1523px;top:1708px;width:12px;height:6px;background:#7c8089;border-radius:3px"></div>
<div class="a" style="left:1611px;top:1708px;width:12px;height:6px;background:#7c8089;border-radius:3px"></div>
<div class="a" style="left:1699px;top:1708px;width:12px;height:6px;background:#7c8089;border-radius:3px"></div>
<div class="a" style="left:1787px;top:1708px;width:12px;height:6px;background:#7c8089;border-radius:3px"></div>
<svg class="a" style="left:2312px;top:1668px" width="22" height="14" viewBox="0 0 22 14"><path d="M1.5 12.5 L11 2.5 L20.5 12.5" fill="none" stroke="#1b1b1b" stroke-width="2.2"/></svg>
<div class="a" style="left:2374px;top:1662px;width:23px;height:17px;background:#8b8f96"></div>
<div class="a" style="left:2374px;top:1679px;width:23px;height:8px;background:#4cb8f2"></div>
<div class="t" style="left:2441.0px;top:1667.4px;font-size:22px;line-height:22px;color:#1b1b1b;font-weight:400;font-style:normal;letter-spacing:0px;">ENG</div>
<svg class="a" style="left:2523px;top:1660px" width="32" height="32" viewBox="0 0 32 32"><g fill="none" stroke="#1b1b1b" stroke-width="1.8"><rect x="1" y="1" width="22" height="20" rx="2"/><path d="M8 28 H20 M13 21 V28"/><rect x="22" y="1" width="8" height="9" rx="3"/><path d="M26 10 V31"/></g></svg>
<svg class="a" style="left:2570px;top:1664px" width="32" height="23" viewBox="0 0 32 23"><g fill="none" stroke="#1b1b1b" stroke-width="1.8"><path d="M1 7 H6 L13 1 V22 L6 16 H1Z"/><path d="M19 6 L30 17 M30 6 L19 17"/></g></svg>
<svg class="a" style="left:2618px;top:1660px" width="34" height="26" viewBox="0 0 34 26"><rect x="1" y="6" width="27" height="19" rx="3" fill="none" stroke="#1b1b1b" stroke-width="1.8"/><rect x="4" y="9" width="21" height="13" fill="#1b1b1b"/><rect x="29" y="12" width="4" height="7" rx="1" fill="#1b1b1b"/><path d="M6 0 L3 9 L8 9 L5 16 L12 6 L8 6 L10 0Z" fill="#1b1b1b" stroke="#e3ebf6" stroke-width="1"/></svg>
<div class="t" style="left:2592.0px;width:200px;text-align:right;top:1648.4px;font-size:22.5px;line-height:22.5px;color:#1b1b1b;font-weight:400;font-style:normal;letter-spacing:0px">12:53 PM</div>
<div class="t" style="left:2593.0px;width:200px;text-align:right;top:1680.4px;font-size:22.5px;line-height:22.5px;color:#1b1b1b;font-weight:400;font-style:normal;letter-spacing:1.1px">9/24/2025</div>
<svg class="a" style="left:2811px;top:1662px" width="26" height="28" viewBox="0 0 26 28"><g fill="none" stroke="#1b1b1b" stroke-width="1.8"><path d="M4 20 V11 Q4 2 13 2 Q22 2 22 11 V20 L25 23 H1Z"/><path d="M9 24 Q13 29 17 24"/></g></svg>
</body></html>
